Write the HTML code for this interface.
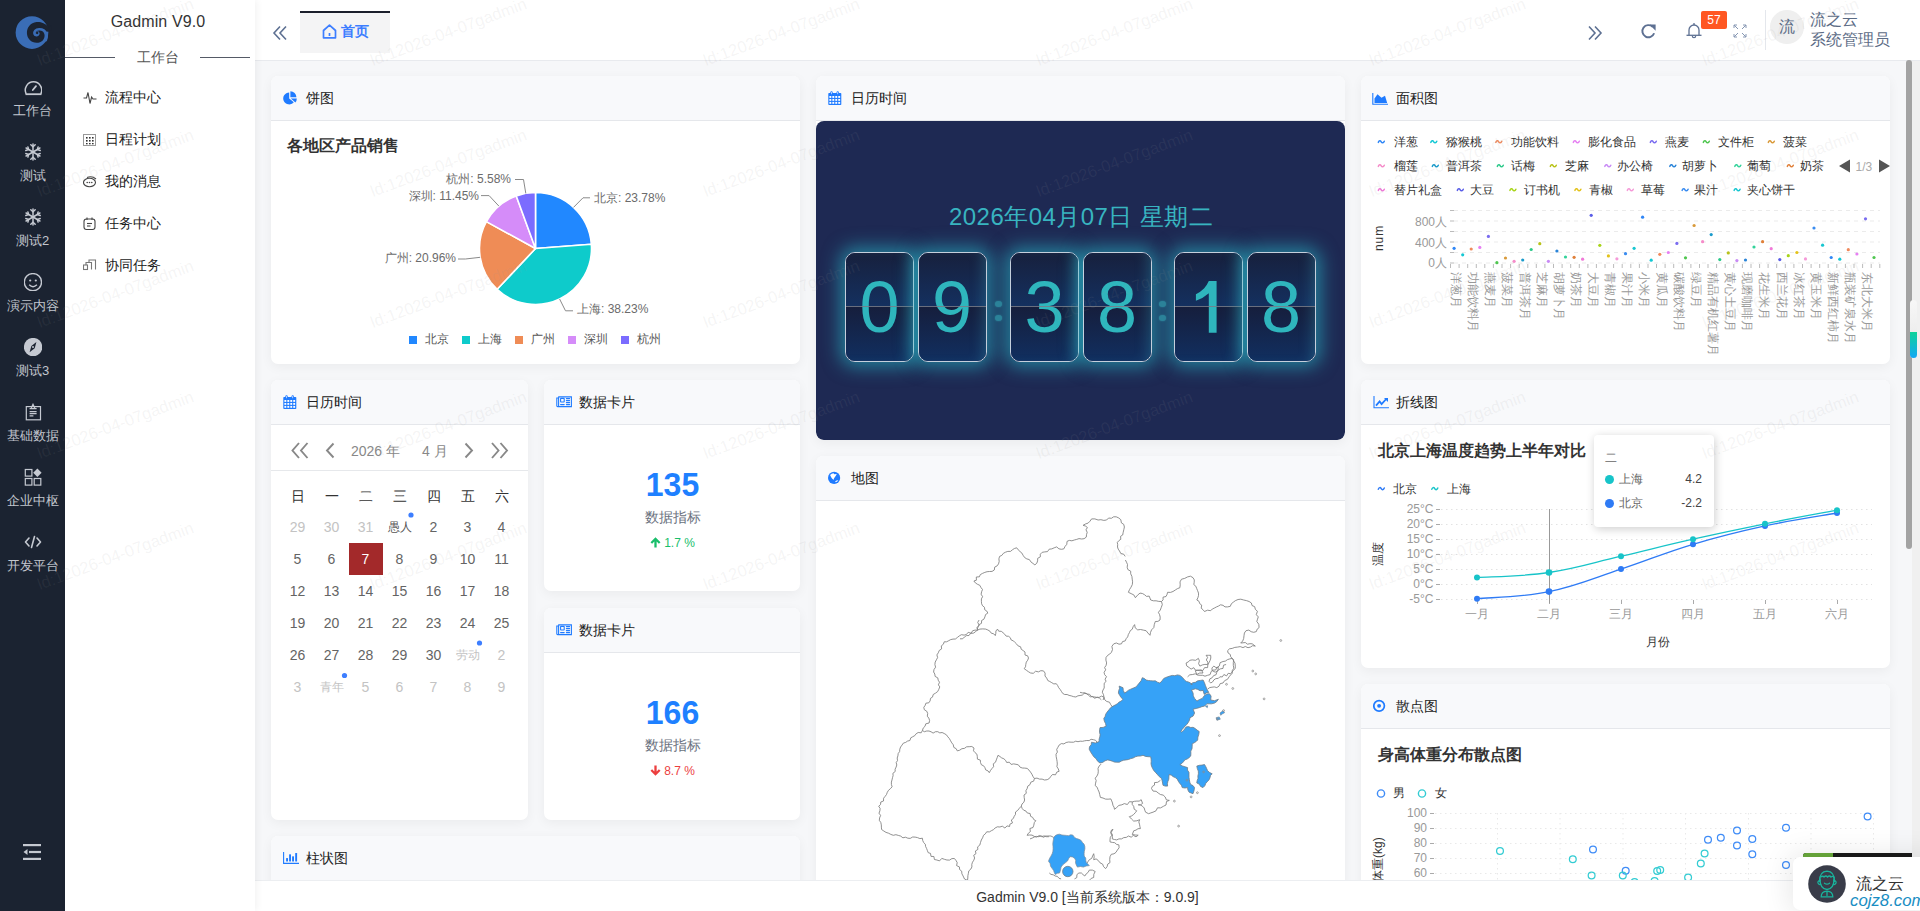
<!DOCTYPE html>
<html><head><meta charset="utf-8"><title>Gadmin</title><style>
*{box-sizing:border-box;margin:0;padding:0}
html,body{width:1920px;height:911px;overflow:hidden;background:#f6f7f9;font-family:"Liberation Sans",sans-serif;color:#333}
.abs{position:absolute}
#sb1{position:absolute;left:0;top:0;width:65px;height:911px;background:#1b2331}
#sb2{position:absolute;left:65px;top:0;width:190px;height:911px;background:#fff;z-index:5;box-shadow:2px 0 7px rgba(0,0,0,0.05)}
#hdr{position:absolute;left:255px;top:0;width:1665px;height:61px;background:#fff;border-bottom:1px solid #e8eaee}
#main{position:absolute;left:255px;top:61px;width:1665px;height:819px;background:#f6f7f9;overflow:hidden}
#ftr{position:absolute;left:255px;top:880px;width:1665px;height:31px;background:#fff;border-top:1px solid #eceef1}
.card{position:absolute;background:#fff;border-radius:7px;box-shadow:0 3px 12px rgba(0,0,0,0.05);overflow:hidden}
.ch{position:absolute;left:0;top:0;right:0;height:45px;background:#f8f9fb;border-bottom:1px solid #e5e7eb}
.ct{position:absolute;top:0;height:44px;line-height:44px;font-size:14px;color:#222}
.t{position:absolute;white-space:nowrap;line-height:1}

</style></head><body>
<div id="sb1">
<svg class="abs" style="left:12px;top:12px" width="40" height="40" viewBox="0 0 911 911">
<circle cx="455" cy="468" r="372" fill="#3a6db6"/>
<path d="M832 348 C760 250 650 222 560 230 C420 242 338 360 340 480 C342 610 440 702 560 702 C680 702 742 620 742 540 C742 500 730 470 715 450 L800 450 L900 420 L900 300 Z" fill="#1b2331"/>
<path d="M770 640 C800 560 790 470 720 420 C660 380 570 385 530 430 C495 470 510 520 555 525 C595 528 610 490 590 470" fill="none" stroke="#3a6db6" stroke-width="62" stroke-linecap="round"/>
<circle cx="575" cy="478" r="26" fill="#1b2331"/>
</svg>
<svg class="abs" style="left:23.5px;top:78px" width="18" height="18" viewBox="0 0 18 18"><path d="M2.2 15.8 A8.2 8.2 0 1 1 16.8 15.8" fill="none" stroke="#c5c9d1" stroke-width="1.5"/><line x1="1.5" y1="16.2" x2="17.5" y2="16.2" stroke="#c5c9d1" stroke-width="1.8"/><line x1="8.8" y1="12" x2="12" y2="8.2" stroke="#c5c9d1" stroke-width="1.8" stroke-linecap="round"/></svg>
<div class="t" style="left:0;width:65px;text-align:center;top:104px;font-size:13px;color:#c2c6ce">工作台</div>
<svg class="abs" style="left:23.5px;top:143px" width="18" height="18" viewBox="0 0 18 18"><g stroke="#c5c9d1" stroke-width="1.5" stroke-linecap="round" fill="none"><line x1="9" y1="1" x2="9" y2="17"/><line x1="2.1" y1="5" x2="15.9" y2="13"/><line x1="2.1" y1="13" x2="15.9" y2="5"/><path d="M6.8 1.8 L9 3.8 L11.2 1.8 M6.8 16.2 L9 14.2 L11.2 16.2 M1.8 7.5 L4.6 6.6 L3.9 3.9 M16.2 10.5 L13.4 11.4 L14.1 14.1 M1.8 10.5 L4.6 11.4 L3.9 14.1 M16.2 7.5 L13.4 6.6 L14.1 3.9"/></g></svg>
<div class="t" style="left:0;width:65px;text-align:center;top:169px;font-size:13px;color:#c2c6ce">测试</div>
<svg class="abs" style="left:23.5px;top:208px" width="18" height="18" viewBox="0 0 18 18"><g stroke="#c5c9d1" stroke-width="1.5" stroke-linecap="round" fill="none"><line x1="9" y1="1" x2="9" y2="17"/><line x1="2.1" y1="5" x2="15.9" y2="13"/><line x1="2.1" y1="13" x2="15.9" y2="5"/><path d="M6.8 1.8 L9 3.8 L11.2 1.8 M6.8 16.2 L9 14.2 L11.2 16.2 M1.8 7.5 L4.6 6.6 L3.9 3.9 M16.2 10.5 L13.4 11.4 L14.1 14.1 M1.8 10.5 L4.6 11.4 L3.9 14.1 M16.2 7.5 L13.4 6.6 L14.1 3.9"/></g></svg>
<div class="t" style="left:0;width:65px;text-align:center;top:234px;font-size:13px;color:#c2c6ce">测试2</div>
<svg class="abs" style="left:23.5px;top:273px" width="18" height="18" viewBox="0 0 18 18"><circle cx="8.9" cy="9.2" r="8.6" fill="none" stroke="#c5c9d1" stroke-width="1.4"/><circle cx="6.2" cy="7.5" r="1.1" fill="#c5c9d1"/><circle cx="11.8" cy="7.5" r="1.1" fill="#c5c9d1"/><path d="M5.2 11.8 Q9 15.6 12.9 11.8" fill="none" stroke="#c5c9d1" stroke-width="1.4"/></svg>
<div class="t" style="left:0;width:65px;text-align:center;top:299px;font-size:13px;color:#c2c6ce">演示内容</div>
<svg class="abs" style="left:23.5px;top:338px" width="18" height="18" viewBox="0 0 18 18"><circle cx="9.1" cy="9.1" r="9.2" fill="#c5c9d1"/><path d="M12.4 4 L10.7 10.2 L5.6 14.2 L7.4 8 Z" fill="#1b2331"/><circle cx="9" cy="9.1" r="1" fill="#c5c9d1"/></svg>
<div class="t" style="left:0;width:65px;text-align:center;top:364px;font-size:13px;color:#c2c6ce">测试3</div>
<svg class="abs" style="left:23.5px;top:403px" width="18" height="18" viewBox="0 0 18 18"><g fill="none" stroke="#c5c9d1" stroke-width="1.2"><rect x="2.3" y="3.6" width="14.2" height="13.2"/><path d="M6.9 5.8 L9 1.3 L11.1 5.8"/><path d="M5.6 5.7 H12.6 M5.6 8.6 H12.6 M5.6 10.7 H12.6 M5.6 12.8 H9.4"/></g></svg>
<div class="t" style="left:0;width:65px;text-align:center;top:429px;font-size:13px;color:#c2c6ce">基础数据</div>
<svg class="abs" style="left:23.5px;top:468px" width="18" height="18" viewBox="0 0 18 18"><g fill="none" stroke="#c5c9d1" stroke-width="1.2"><rect x="1.3" y="1.5" width="6.6" height="6.6"/><rect x="1.3" y="10.5" width="6.6" height="6.6"/><rect x="10.2" y="10.5" width="6.6" height="6.6"/></g><path d="M13.4 0.6 L17.6 4.8 L13.4 9 L9.2 4.8 Z" fill="#c5c9d1"/></svg>
<div class="t" style="left:0;width:65px;text-align:center;top:494px;font-size:13px;color:#c2c6ce">企业中枢</div>
<svg class="abs" style="left:23.5px;top:533px" width="18" height="18" viewBox="0 0 18 18"><g fill="none" stroke="#c5c9d1" stroke-width="1.6" stroke-linecap="round" stroke-linejoin="round"><path d="M5 5 L1.5 9 L5 13"/><path d="M13 5 L16.5 9 L13 13"/><line x1="10.5" y1="3.5" x2="7.5" y2="14.5"/></g></svg>
<div class="t" style="left:0;width:65px;text-align:center;top:559px;font-size:13px;color:#c2c6ce">开发平台</div>
<svg class="abs" style="left:23px;top:843px" width="18" height="18" viewBox="0 0 18 18"><g fill="#c5c9d1"><rect x="0" y="1" width="18" height="2.2"/><rect x="6" y="7.9" width="12" height="2.2"/><rect x="0" y="14.8" width="18" height="2.2"/><path d="M0.5 9 L4.5 6 L4.5 12 Z"/></g></svg>
</div>
<div id="sb2">
<div class="t" style="left:-2px;width:190px;text-align:center;top:14px;font-size:16px;color:#333;letter-spacing:0.1px">Gadmin V9.0</div>
<div class="abs" style="left:0;top:57px;width:50px;height:1px;background:#555a66"></div>
<div class="abs" style="left:135px;top:57px;width:50px;height:1px;background:#555a66"></div>
<div class="t" style="left:0;width:186px;text-align:center;top:50px;font-size:14px;color:#555">工作台</div>
<svg class="abs" style="left:18px;top:91px" width="14" height="14" viewBox="0 0 14 14"><path d="M0.5 7 H3.5 L5 1.5 L7 12.5 L8.6 6 L10 8 H13.5" fill="none" stroke="#444" stroke-width="1.1"/></svg>
<div class="t" style="left:40px;top:90px;font-size:14px;color:#222">流程中心</div>
<svg class="abs" style="left:18px;top:133px" width="14" height="14" viewBox="0 0 14 14"><g fill="none" stroke="#999" stroke-width="1"><rect x="0.5" y="1.5" width="12" height="11"/></g><g fill="#333"><rect x="3" y="4" width="1.6" height="1.6"/><rect x="6" y="4" width="1.6" height="1.6"/><rect x="9" y="4" width="1.6" height="1.6"/><rect x="3" y="7" width="1.6" height="1.6"/><rect x="6" y="7" width="1.6" height="1.6"/><rect x="9" y="7" width="1.6" height="1.6"/><rect x="3" y="10" width="1.6" height="1.3"/><rect x="6" y="10" width="1.6" height="1.3"/><rect x="9" y="10" width="1.6" height="1.3"/></g></svg>
<div class="t" style="left:40px;top:132px;font-size:14px;color:#222">日程计划</div>
<svg class="abs" style="left:18px;top:175px" width="14" height="14" viewBox="0 0 14 14"><g fill="none" stroke="#444" stroke-width="1.1"><ellipse cx="6.5" cy="7.5" rx="6" ry="4.2"/><path d="M4 2.5 Q9 0.5 13 4"/></g><g fill="#444"><circle cx="4.2" cy="7.5" r="0.8"/><circle cx="6.5" cy="7.5" r="0.8"/><circle cx="8.8" cy="7.5" r="0.8"/></g></svg>
<div class="t" style="left:40px;top:174px;font-size:14px;color:#222">我的消息</div>
<svg class="abs" style="left:18px;top:217px" width="14" height="14" viewBox="0 0 14 14"><g fill="none" stroke="#444" stroke-width="1.1"><rect x="1" y="2" width="11" height="10.5" rx="2.5"/><line x1="4" y1="0.5" x2="4" y2="3"/><line x1="9" y1="0.5" x2="9" y2="3"/><line x1="4" y1="6.5" x2="9" y2="6.5"/><line x1="4" y1="9" x2="7.5" y2="9"/></g></svg>
<div class="t" style="left:40px;top:216px;font-size:14px;color:#222">任务中心</div>
<svg class="abs" style="left:18px;top:259px" width="14" height="14" viewBox="0 0 14 14"><g fill="none" stroke="#777" stroke-width="1.1"><rect x="0.5" y="6" width="4" height="4.5"/><path d="M3 6 V3.5 H8.5 V10.5"/><path d="M6 3.5 V1 H12.5 V10.5"/></g></svg>
<div class="t" style="left:40px;top:258px;font-size:14px;color:#222">协同任务</div>
</div>
<div id="hdr">
<svg class="abs" style="left:17px;top:25px" width="16" height="16" viewBox="0 0 16 16"><g fill="none" stroke="#5d7092" stroke-width="1.6"><path d="M8 1.5 L2 8 L8 14.5"/><path d="M14 1.5 L8 8 L14 14.5"/></g></svg>
<div class="abs" style="left:45px;top:11px;width:90px;height:42px;background:#f4f4f5;border-top:2px solid #1b1f2c"></div>
<svg class="abs" style="left:67px;top:24px" width="15" height="15" viewBox="0 0 15 15"><path d="M1.5 6.5 L7.5 1.2 L13.5 6.5 V13.8 H1.5 Z" fill="none" stroke="#3d7eff" stroke-width="1.7" stroke-linejoin="round"/><line x1="7.5" y1="9" x2="7.5" y2="12" stroke="#3d7eff" stroke-width="1.7"/></svg>
<div class="t" style="left:86px;top:24px;font-size:14px;color:#3d7eff;font-weight:bold">首页</div>
<svg class="abs" style="left:1332px;top:25px" width="16" height="16" viewBox="0 0 16 16"><g fill="none" stroke="#5d7092" stroke-width="1.6"><path d="M2 1.5 L8 8 L2 14.5"/><path d="M8 1.5 L14 8 L8 14.5"/></g></svg>
<svg class="abs" style="left:1384.5px;top:22.5px" width="17" height="17" viewBox="0 0 16 16"><path d="M13.3 9.6 A5.7 5.7 0 1 1 11.9 3.6" fill="none" stroke="#5d7092" stroke-width="1.8"/><path d="M8.8 1.3 H14.7 V7.2 Z" fill="#5d7092"/></svg>
<svg class="abs" style="left:1431px;top:22px" width="16" height="18" viewBox="0 0 16 18"><path d="M3 13 V8 A5 5 0 0 1 13 8 V13" fill="none" stroke="#5d7092" stroke-width="1.3"/><line x1="0.5" y1="13.3" x2="15.5" y2="13.3" stroke="#5d7092" stroke-width="1.3"/><path d="M6.3 14 A1.7 1.7 0 0 0 9.7 14" fill="none" stroke="#5d7092" stroke-width="1.2"/><line x1="8" y1="1" x2="8" y2="3" stroke="#5d7092" stroke-width="1.3"/></svg>
<div class="abs" style="left:1446px;top:11px;width:26px;height:18px;background:#ff5722;border-radius:2px;color:#fff;font-size:12px;line-height:18px;text-align:center">57</div>
<svg class="abs" style="left:1478px;top:24px" width="14" height="14" viewBox="0 0 14 14"><g fill="none" stroke="#8596b2" stroke-width="1"><path d="M1 4 V1 H4 M1 1 L5 5"/><path d="M10 1 H13 V4 M13 1 L9 5"/><path d="M1 10 V13 H4 M1 13 L5 9"/><path d="M13 10 V13 H10 M13 13 L9 9"/></g></svg>
<div class="abs" style="left:1510px;top:10px;width:1px;height:40px;background:#e4e7ec"></div>
<div class="abs" style="left:1515px;top:10px;width:34px;height:34px;border-radius:50%;background:#efefef;color:#5b6b85;font-size:16px;line-height:34px;text-align:center">流</div>
<div class="t" style="left:1555px;top:12px;font-size:16px;color:#5b6b85">流之云</div>
<div class="t" style="left:1555px;top:32px;font-size:16px;color:#5b6b85">系统管理员</div>
</div>
<div id="main"></div>
<div class="card" id="c_pie" style="left:271px;top:76px;width:529px;height:288px">
<div class="ch"><div class="abs" style="left:12px;top:15px;line-height:0"><svg width="14" height="14" viewBox="0 0 14 14"><path d="M6.2 7.4 L6.2 1.4 A6 6 0 1 0 10.8 11.26 Z" fill="#1f7bff"/><path d="M7.4 6.2 L7.4 0.2 A6 6 0 0 1 13.4 6.2 Z" fill="#1f7bff"/><path d="M7.8 7.6 L13.8 7.6 A6 6 0 0 1 12.4 11.46 Z" fill="#1f7bff"/></svg></div><div class="t" style="left:34.5px;top:15px;font-size:14px;color:#222">饼图</div></div>
<svg class="abs" style="left:0;top:0" width="529" height="288" viewBox="271 76 529 288"><path d="M535.5 248.5 L535.50 192.50 A56 56 0 0 1 591.34 244.21 Z" fill="#2188ff" stroke="#fff" stroke-width="1.6" stroke-linejoin="round"/><path d="M535.5 248.5 L591.34 244.21 A56 56 0 0 1 497.14 289.30 Z" fill="#0ecbcb" stroke="#fff" stroke-width="1.6" stroke-linejoin="round"/><path d="M535.5 248.5 L497.14 289.30 A56 56 0 0 1 486.38 221.61 Z" fill="#ef8c56" stroke="#fff" stroke-width="1.6" stroke-linejoin="round"/><path d="M535.5 248.5 L486.38 221.61 A56 56 0 0 1 516.27 195.91 Z" fill="#d58cf9" stroke="#fff" stroke-width="1.6" stroke-linejoin="round"/><path d="M535.5 248.5 L516.27 195.91 A56 56 0 0 1 535.50 192.50 Z" fill="#7b6cff" stroke="#fff" stroke-width="1.6" stroke-linejoin="round"/><polyline points="573.5,207.4 583,197.8 590,197.8" fill="none" stroke="#8a8a8a" stroke-width="1"/><polyline points="559.6,299 565.5,310.8 573,310.8" fill="none" stroke="#8a8a8a" stroke-width="1"/><polyline points="480.2,257.3 465.4,259 458,259" fill="none" stroke="#8a8a8a" stroke-width="1"/><polyline points="498.9,206.1 489.1,195.6 481,195.6" fill="none" stroke="#8a8a8a" stroke-width="1"/><polyline points="525.8,193.4 523.5,179.5 515,179.5" fill="none" stroke="#8a8a8a" stroke-width="1"/><rect x="409" y="336" width="8" height="8" fill="#2188ff"/><rect x="462" y="336" width="8" height="8" fill="#0ecbcb"/><rect x="515" y="336" width="8" height="8" fill="#ef8c56"/><rect x="568" y="336" width="8" height="8" fill="#d58cf9"/><rect x="621" y="336" width="8" height="8" fill="#7b6cff"/></svg><div class="abs" style="left:-271px;top:-76px;width:0;height:0"><div class="t" style="left:287px;top:138px;font-size:16px;color:#333;font-weight:bold;">各地区产品销售</div><div class="t" style="left:594px;top:191.5px;font-size:12px;color:#6b6b6b;font-weight:normal;">北京: 23.78%</div><div class="t" style="left:577px;top:303px;font-size:12px;color:#6b6b6b;font-weight:normal;">上海: 38.23%</div><div class="t" style="left:56px;width:400px;text-align:right;top:252px;font-size:12px;color:#6b6b6b;font-weight:normal;">广州: 20.96%</div><div class="t" style="left:79px;width:400px;text-align:right;top:189.5px;font-size:12px;color:#6b6b6b;font-weight:normal;">深圳: 11.45%</div><div class="t" style="left:111px;width:400px;text-align:right;top:173px;font-size:12px;color:#6b6b6b;font-weight:normal;">杭州: 5.58%</div><div class="t" style="left:425px;top:333px;font-size:12px;color:#555;font-weight:normal;">北京</div><div class="t" style="left:478px;top:333px;font-size:12px;color:#555;font-weight:normal;">上海</div><div class="t" style="left:531px;top:333px;font-size:12px;color:#555;font-weight:normal;">广州</div><div class="t" style="left:584px;top:333px;font-size:12px;color:#555;font-weight:normal;">深圳</div><div class="t" style="left:637px;top:333px;font-size:12px;color:#555;font-weight:normal;">杭州</div></div>
</div>
<div class="card" id="c_clock" style="left:816px;top:76px;width:529px;height:364px">
<div class="ch"><div class="abs" style="left:12px;top:15px;line-height:0"><svg width="14" height="14" viewBox="0 0 14 14"><rect x="0.3" y="2" width="13" height="12" rx="0.8" fill="#1f7bff"/><g fill="#fff"><rect x="1.40" y="5.00" width="1.9" height="1.9"/><rect x="4.35" y="5.00" width="1.9" height="1.9"/><rect x="7.30" y="5.00" width="1.9" height="1.9"/><rect x="10.25" y="5.00" width="1.9" height="1.9"/><rect x="1.40" y="7.95" width="1.9" height="1.9"/><rect x="4.35" y="7.95" width="1.9" height="1.9"/><rect x="7.30" y="7.95" width="1.9" height="1.9"/><rect x="10.25" y="7.95" width="1.9" height="1.9"/><rect x="1.40" y="10.90" width="1.9" height="1.9"/><rect x="4.35" y="10.90" width="1.9" height="1.9"/><rect x="7.30" y="10.90" width="1.9" height="1.9"/><rect x="10.25" y="10.90" width="1.9" height="1.9"/></g><g fill="#1f7bff"><rect x="2.4" y="0.2" width="2.2" height="3.5" rx="1"/><rect x="8.6" y="0.2" width="2.2" height="3.5" rx="1"/></g><g fill="#cfe0ff"><rect x="3.1" y="1" width="0.8" height="2.2"/><rect x="9.3" y="1" width="0.8" height="2.2"/></g></svg></div><div class="t" style="left:34.5px;top:15px;font-size:14px;color:#222">日历时间</div></div>
<div class="abs" style="left:0;top:45px;width:529px;height:319px;background:#1e2953;border-radius:8px"></div><div class="abs" style="left:-816px;top:-76px;width:0;height:0"><div class="t" style="left:949px;top:205px;font-size:24px;color:#38b4c0;font-weight:normal;letter-spacing:0.45px">2026年04月07日 星期二</div><div class="abs" style="left:845px;top:252px;width:69px;height:110px;border-radius:10px;box-shadow:0 0 18px 5px rgba(42,190,205,0.58)"></div><div class="abs" style="left:845px;top:252px;width:69px;height:110px;border:1px solid rgba(215,225,235,0.9);border-radius:10px;overflow:hidden"><div class="abs" style="left:0;top:0;width:67px;height:53px;background:linear-gradient(#17203d,#14305f)"></div><div class="abs" style="left:0;top:53px;width:67px;height:55px;background:linear-gradient(#161e3c,#112f60)"></div><div class="abs" style="left:0;top:0;width:67px;height:108px;box-shadow:inset -10px 0 14px -8px rgba(60,175,195,0.35)"></div><div class="t" style="left:0;width:67px;text-align:center;top:17.5px;font-size:72px;color:#2fb6bd">0</div><div class="abs" style="left:0;top:53px;width:67px;height:1px;background:rgba(120,124,138,0.85)"></div></div><div class="abs" style="left:917.5px;top:252px;width:69px;height:110px;border-radius:10px;box-shadow:0 0 18px 5px rgba(42,190,205,0.58)"></div><div class="abs" style="left:917.5px;top:252px;width:69px;height:110px;border:1px solid rgba(215,225,235,0.9);border-radius:10px;overflow:hidden"><div class="abs" style="left:0;top:0;width:67px;height:53px;background:linear-gradient(#17203d,#14305f)"></div><div class="abs" style="left:0;top:53px;width:67px;height:55px;background:linear-gradient(#161e3c,#112f60)"></div><div class="abs" style="left:0;top:0;width:67px;height:108px;box-shadow:inset -10px 0 14px -8px rgba(60,175,195,0.35)"></div><div class="t" style="left:0;width:67px;text-align:center;top:17.5px;font-size:72px;color:#2fb6bd">9</div><div class="abs" style="left:0;top:53px;width:67px;height:1px;background:rgba(120,124,138,0.85)"></div></div><div class="abs" style="left:1010px;top:252px;width:69px;height:110px;border-radius:10px;box-shadow:0 0 18px 5px rgba(42,190,205,0.58)"></div><div class="abs" style="left:1010px;top:252px;width:69px;height:110px;border:1px solid rgba(215,225,235,0.9);border-radius:10px;overflow:hidden"><div class="abs" style="left:0;top:0;width:67px;height:53px;background:linear-gradient(#17203d,#14305f)"></div><div class="abs" style="left:0;top:53px;width:67px;height:55px;background:linear-gradient(#161e3c,#112f60)"></div><div class="abs" style="left:0;top:0;width:67px;height:108px;box-shadow:inset -10px 0 14px -8px rgba(60,175,195,0.35)"></div><div class="t" style="left:0;width:67px;text-align:center;top:17.5px;font-size:72px;color:#2fb6bd">3</div><div class="abs" style="left:0;top:53px;width:67px;height:1px;background:rgba(120,124,138,0.85)"></div></div><div class="abs" style="left:1082.5px;top:252px;width:69px;height:110px;border-radius:10px;box-shadow:0 0 18px 5px rgba(42,190,205,0.58)"></div><div class="abs" style="left:1082.5px;top:252px;width:69px;height:110px;border:1px solid rgba(215,225,235,0.9);border-radius:10px;overflow:hidden"><div class="abs" style="left:0;top:0;width:67px;height:53px;background:linear-gradient(#17203d,#14305f)"></div><div class="abs" style="left:0;top:53px;width:67px;height:55px;background:linear-gradient(#161e3c,#112f60)"></div><div class="abs" style="left:0;top:0;width:67px;height:108px;box-shadow:inset -10px 0 14px -8px rgba(60,175,195,0.35)"></div><div class="t" style="left:0;width:67px;text-align:center;top:17.5px;font-size:72px;color:#2fb6bd">8</div><div class="abs" style="left:0;top:53px;width:67px;height:1px;background:rgba(120,124,138,0.85)"></div></div><div class="abs" style="left:1174px;top:252px;width:69px;height:110px;border-radius:10px;box-shadow:0 0 18px 5px rgba(42,190,205,0.58)"></div><div class="abs" style="left:1174px;top:252px;width:69px;height:110px;border:1px solid rgba(215,225,235,0.9);border-radius:10px;overflow:hidden"><div class="abs" style="left:0;top:0;width:67px;height:53px;background:linear-gradient(#17203d,#14305f)"></div><div class="abs" style="left:0;top:53px;width:67px;height:55px;background:linear-gradient(#161e3c,#112f60)"></div><div class="abs" style="left:0;top:0;width:67px;height:108px;box-shadow:inset -10px 0 14px -8px rgba(60,175,195,0.35)"></div><svg class="abs" style="left:0;top:0" width="69" height="110" viewBox="1175 253 69 110"><path d="M1208.8 281 L1216.6 281 L1216.6 332.8 L1208.8 332.8 L1208.8 293.2 Q1203.5 298 1195.9 300.8 L1195.9 294.2 Q1200.5 292 1204 288.5 Q1207 285.2 1208.8 281 Z" fill="#2fb6bd"/></svg><div class="abs" style="left:0;top:53px;width:67px;height:1px;background:rgba(120,124,138,0.85)"></div></div><div class="abs" style="left:1246.5px;top:252px;width:69px;height:110px;border-radius:10px;box-shadow:0 0 18px 5px rgba(42,190,205,0.58)"></div><div class="abs" style="left:1246.5px;top:252px;width:69px;height:110px;border:1px solid rgba(215,225,235,0.9);border-radius:10px;overflow:hidden"><div class="abs" style="left:0;top:0;width:67px;height:53px;background:linear-gradient(#17203d,#14305f)"></div><div class="abs" style="left:0;top:53px;width:67px;height:55px;background:linear-gradient(#161e3c,#112f60)"></div><div class="abs" style="left:0;top:0;width:67px;height:108px;box-shadow:inset -10px 0 14px -8px rgba(60,175,195,0.35)"></div><div class="t" style="left:0;width:67px;text-align:center;top:17.5px;font-size:72px;color:#2fb6bd">8</div><div class="abs" style="left:0;top:53px;width:67px;height:1px;background:rgba(120,124,138,0.85)"></div></div><div class="abs" style="left:994.5px;top:301.3px;width:7px;height:6px;border-radius:50%;background:#2b8299;box-shadow:0 0 2px #2b8299"></div><div class="abs" style="left:994.5px;top:315.2px;width:7px;height:6px;border-radius:50%;background:#2b8299;box-shadow:0 0 2px #2b8299"></div><div class="abs" style="left:1159.0px;top:301.3px;width:7px;height:6px;border-radius:50%;background:#2b8299;box-shadow:0 0 2px #2b8299"></div><div class="abs" style="left:1159.0px;top:315.2px;width:7px;height:6px;border-radius:50%;background:#2b8299;box-shadow:0 0 2px #2b8299"></div></div>
</div>
<div class="card" id="c_area" style="left:1361px;top:76px;width:529px;height:288px">
<div class="ch"><div class="abs" style="left:11px;top:17px;line-height:0"><svg width="16" height="12" viewBox="0 0 16 12"><path d="M0.8 0 V11.2 H16" fill="none" stroke="#1f7bff" stroke-width="1.1"/><path d="M2.5 10 L2.5 5.5 L5.5 1.2 L9.5 4.8 L13 2.8 L15.2 10 Z" fill="#1f7bff"/></svg></div><div class="t" style="left:34.5px;top:15px;font-size:14px;color:#222">面积图</div></div>
<svg class="abs" style="left:0;top:0" width="529" height="288" viewBox="1361 76 529 288"><path d="M1378.3 142.4 C1379.2 140.4 1380.4 140.4 1381.2 141.8 S1383.4 143.4 1384.3 141.20000000000002" fill="none" stroke="#2f86f6" stroke-width="1.5" stroke-linecap="round"/><path d="M1430.8 142.4 C1431.7 140.4 1432.9 140.4 1433.7 141.8 S1435.9 143.4 1436.8 141.20000000000002" fill="none" stroke="#14c8d4" stroke-width="1.5" stroke-linecap="round"/><path d="M1495.8 142.4 C1496.7 140.4 1497.9 140.4 1498.7 141.8 S1500.9 143.4 1501.8 141.20000000000002" fill="none" stroke="#f08a5d" stroke-width="1.5" stroke-linecap="round"/><path d="M1573.3 142.4 C1574.2 140.4 1575.4 140.4 1576.2 141.8 S1578.4 143.4 1579.3 141.20000000000002" fill="none" stroke="#e680f2" stroke-width="1.5" stroke-linecap="round"/><path d="M1650.3 142.4 C1651.2 140.4 1652.4 140.4 1653.2 141.8 S1655.4 143.4 1656.3 141.20000000000002" fill="none" stroke="#7a6cf0" stroke-width="1.5" stroke-linecap="round"/><path d="M1703.3 142.4 C1704.2 140.4 1705.4 140.4 1706.2 141.8 S1708.4 143.4 1709.3 141.20000000000002" fill="none" stroke="#4fc64f" stroke-width="1.5" stroke-linecap="round"/><path d="M1768.3 142.4 C1769.2 140.4 1770.4 140.4 1771.2 141.8 S1773.4 143.4 1774.3 141.20000000000002" fill="none" stroke="#d99a3a" stroke-width="1.5" stroke-linecap="round"/><path d="M1378.3 166.4 C1379.2 164.4 1380.4 164.4 1381.2 165.8 S1383.4 167.4 1384.3 165.20000000000002" fill="none" stroke="#f58cc9" stroke-width="1.5" stroke-linecap="round"/><path d="M1432.3 166.4 C1433.2 164.4 1434.4 164.4 1435.2 165.8 S1437.4 167.4 1438.3 165.20000000000002" fill="none" stroke="#1a9bcc" stroke-width="1.5" stroke-linecap="round"/><path d="M1497.3 166.4 C1498.2 164.4 1499.4 164.4 1500.2 165.8 S1502.4 167.4 1503.3 165.20000000000002" fill="none" stroke="#2cc98a" stroke-width="1.5" stroke-linecap="round"/><path d="M1550.3 166.4 C1551.2 164.4 1552.4 164.4 1553.2 165.8 S1555.4 167.4 1556.3 165.20000000000002" fill="none" stroke="#b8c21a" stroke-width="1.5" stroke-linecap="round"/><path d="M1604.8 166.4 C1605.7 164.4 1606.9 164.4 1607.7 165.8 S1609.9 167.4 1610.8 165.20000000000002" fill="none" stroke="#c88af5" stroke-width="1.5" stroke-linecap="round"/><path d="M1669.8 166.4 C1670.7 164.4 1671.9 164.4 1672.7 165.8 S1674.9 167.4 1675.8 165.20000000000002" fill="none" stroke="#2a84d8" stroke-width="1.5" stroke-linecap="round"/><path d="M1734.8 166.4 C1735.7 164.4 1736.9 164.4 1737.7 165.8 S1739.9 167.4 1740.8 165.20000000000002" fill="none" stroke="#33d39a" stroke-width="1.5" stroke-linecap="round"/><path d="M1787.3 166.4 C1788.2 164.4 1789.4 164.4 1790.2 165.8 S1792.4 167.4 1793.3 165.20000000000002" fill="none" stroke="#e0803a" stroke-width="1.5" stroke-linecap="round"/><path d="M1378.3 190.4 C1379.2 188.4 1380.4 188.4 1381.2 189.8 S1383.4 191.4 1384.3 189.20000000000002" fill="none" stroke="#f07ad8" stroke-width="1.5" stroke-linecap="round"/><path d="M1457.3 190.4 C1458.2 188.4 1459.4 188.4 1460.2 189.8 S1462.4 191.4 1463.3 189.20000000000002" fill="none" stroke="#5a5ee8" stroke-width="1.5" stroke-linecap="round"/><path d="M1509.8999999999999 190.4 C1510.8 188.4 1512.0 188.4 1512.8 189.8 S1515.0 191.4 1515.8999999999999 189.20000000000002" fill="none" stroke="#a8d41a" stroke-width="1.5" stroke-linecap="round"/><path d="M1574.8999999999999 190.4 C1575.8 188.4 1577.0 188.4 1577.8 189.8 S1580.0 191.4 1580.8999999999999 189.20000000000002" fill="none" stroke="#e3c21a" stroke-width="1.5" stroke-linecap="round"/><path d="M1627.3 190.4 C1628.2 188.4 1629.4 188.4 1630.2 189.8 S1632.4 191.4 1633.3 189.20000000000002" fill="none" stroke="#f59ad8" stroke-width="1.5" stroke-linecap="round"/><path d="M1682.1 190.4 C1683.0 188.4 1684.2 188.4 1685.0 189.8 S1687.2 191.4 1688.1 189.20000000000002" fill="none" stroke="#3a8cf0" stroke-width="1.5" stroke-linecap="round"/><path d="M1734.1 190.4 C1735.0 188.4 1736.2 188.4 1737.0 189.8 S1739.2 191.4 1740.1 189.20000000000002" fill="none" stroke="#18c6d0" stroke-width="1.5" stroke-linecap="round"/><path d="M1850 159.5 L1839 166 L1850 172.5 Z" fill="#555"/><path d="M1879 159.5 L1890 166 L1879 172.5 Z" fill="#555"/><line x1="1454" y1="210.5" x2="1880" y2="210.5" stroke="#ebebeb" stroke-width="1" stroke-dasharray="4 4"/><line x1="1450" y1="210.5" x2="1454" y2="210.5" stroke="#bbb" stroke-width="1"/><line x1="1454" y1="221.0" x2="1880" y2="221.0" stroke="#ebebeb" stroke-width="1" stroke-dasharray="4 4"/><line x1="1450" y1="221.0" x2="1454" y2="221.0" stroke="#bbb" stroke-width="1"/><line x1="1454" y1="231.5" x2="1880" y2="231.5" stroke="#ebebeb" stroke-width="1" stroke-dasharray="4 4"/><line x1="1450" y1="231.5" x2="1454" y2="231.5" stroke="#bbb" stroke-width="1"/><line x1="1454" y1="242.0" x2="1880" y2="242.0" stroke="#ebebeb" stroke-width="1" stroke-dasharray="4 4"/><line x1="1450" y1="242.0" x2="1454" y2="242.0" stroke="#bbb" stroke-width="1"/><line x1="1454" y1="252.5" x2="1880" y2="252.5" stroke="#ebebeb" stroke-width="1" stroke-dasharray="4 4"/><line x1="1450" y1="252.5" x2="1454" y2="252.5" stroke="#bbb" stroke-width="1"/><line x1="1454" y1="263.0" x2="1880" y2="263.0" stroke="#ebebeb" stroke-width="1" stroke-dasharray="4 4"/><line x1="1450" y1="263.0" x2="1454" y2="263.0" stroke="#bbb" stroke-width="1"/><line x1="1450.5" y1="264" x2="1450.5" y2="268" stroke="#bbb" stroke-width="1"/><line x1="1459.1" y1="264" x2="1459.1" y2="268" stroke="#bbb" stroke-width="1"/><line x1="1467.7" y1="264" x2="1467.7" y2="268" stroke="#bbb" stroke-width="1"/><line x1="1476.3" y1="264" x2="1476.3" y2="268" stroke="#bbb" stroke-width="1"/><line x1="1484.8" y1="264" x2="1484.8" y2="268" stroke="#bbb" stroke-width="1"/><line x1="1493.4" y1="264" x2="1493.4" y2="268" stroke="#bbb" stroke-width="1"/><line x1="1502.0" y1="264" x2="1502.0" y2="268" stroke="#bbb" stroke-width="1"/><line x1="1510.6" y1="264" x2="1510.6" y2="268" stroke="#bbb" stroke-width="1"/><line x1="1519.2" y1="264" x2="1519.2" y2="268" stroke="#bbb" stroke-width="1"/><line x1="1527.8" y1="264" x2="1527.8" y2="268" stroke="#bbb" stroke-width="1"/><line x1="1536.3" y1="264" x2="1536.3" y2="268" stroke="#bbb" stroke-width="1"/><line x1="1544.9" y1="264" x2="1544.9" y2="268" stroke="#bbb" stroke-width="1"/><line x1="1553.5" y1="264" x2="1553.5" y2="268" stroke="#bbb" stroke-width="1"/><line x1="1562.1" y1="264" x2="1562.1" y2="268" stroke="#bbb" stroke-width="1"/><line x1="1570.7" y1="264" x2="1570.7" y2="268" stroke="#bbb" stroke-width="1"/><line x1="1579.3" y1="264" x2="1579.3" y2="268" stroke="#bbb" stroke-width="1"/><line x1="1587.9" y1="264" x2="1587.9" y2="268" stroke="#bbb" stroke-width="1"/><line x1="1596.4" y1="264" x2="1596.4" y2="268" stroke="#bbb" stroke-width="1"/><line x1="1605.0" y1="264" x2="1605.0" y2="268" stroke="#bbb" stroke-width="1"/><line x1="1613.6" y1="264" x2="1613.6" y2="268" stroke="#bbb" stroke-width="1"/><line x1="1622.2" y1="264" x2="1622.2" y2="268" stroke="#bbb" stroke-width="1"/><line x1="1630.8" y1="264" x2="1630.8" y2="268" stroke="#bbb" stroke-width="1"/><line x1="1639.4" y1="264" x2="1639.4" y2="268" stroke="#bbb" stroke-width="1"/><line x1="1648.0" y1="264" x2="1648.0" y2="268" stroke="#bbb" stroke-width="1"/><line x1="1656.5" y1="264" x2="1656.5" y2="268" stroke="#bbb" stroke-width="1"/><line x1="1665.1" y1="264" x2="1665.1" y2="268" stroke="#bbb" stroke-width="1"/><line x1="1673.7" y1="264" x2="1673.7" y2="268" stroke="#bbb" stroke-width="1"/><line x1="1682.3" y1="264" x2="1682.3" y2="268" stroke="#bbb" stroke-width="1"/><line x1="1690.9" y1="264" x2="1690.9" y2="268" stroke="#bbb" stroke-width="1"/><line x1="1699.5" y1="264" x2="1699.5" y2="268" stroke="#bbb" stroke-width="1"/><line x1="1708.0" y1="264" x2="1708.0" y2="268" stroke="#bbb" stroke-width="1"/><line x1="1716.6" y1="264" x2="1716.6" y2="268" stroke="#bbb" stroke-width="1"/><line x1="1725.2" y1="264" x2="1725.2" y2="268" stroke="#bbb" stroke-width="1"/><line x1="1733.8" y1="264" x2="1733.8" y2="268" stroke="#bbb" stroke-width="1"/><line x1="1742.4" y1="264" x2="1742.4" y2="268" stroke="#bbb" stroke-width="1"/><line x1="1751.0" y1="264" x2="1751.0" y2="268" stroke="#bbb" stroke-width="1"/><line x1="1759.6" y1="264" x2="1759.6" y2="268" stroke="#bbb" stroke-width="1"/><line x1="1768.1" y1="264" x2="1768.1" y2="268" stroke="#bbb" stroke-width="1"/><line x1="1776.7" y1="264" x2="1776.7" y2="268" stroke="#bbb" stroke-width="1"/><line x1="1785.3" y1="264" x2="1785.3" y2="268" stroke="#bbb" stroke-width="1"/><line x1="1793.9" y1="264" x2="1793.9" y2="268" stroke="#bbb" stroke-width="1"/><line x1="1802.5" y1="264" x2="1802.5" y2="268" stroke="#bbb" stroke-width="1"/><line x1="1811.1" y1="264" x2="1811.1" y2="268" stroke="#bbb" stroke-width="1"/><line x1="1819.7" y1="264" x2="1819.7" y2="268" stroke="#bbb" stroke-width="1"/><line x1="1828.2" y1="264" x2="1828.2" y2="268" stroke="#bbb" stroke-width="1"/><line x1="1836.8" y1="264" x2="1836.8" y2="268" stroke="#bbb" stroke-width="1"/><line x1="1845.4" y1="264" x2="1845.4" y2="268" stroke="#bbb" stroke-width="1"/><line x1="1854.0" y1="264" x2="1854.0" y2="268" stroke="#bbb" stroke-width="1"/><line x1="1862.6" y1="264" x2="1862.6" y2="268" stroke="#bbb" stroke-width="1"/><line x1="1871.2" y1="264" x2="1871.2" y2="268" stroke="#bbb" stroke-width="1"/><line x1="1879.8" y1="264" x2="1879.8" y2="268" stroke="#bbb" stroke-width="1"/><circle cx="1454.1" cy="248.3" r="1.6" fill="#2f86f6"/><circle cx="1462.7" cy="254.8" r="1.6" fill="#14c8d4"/><circle cx="1471.2" cy="249" r="1.6" fill="#f08a5d"/><circle cx="1479.8" cy="247.4" r="1.6" fill="#e680f2"/><circle cx="1488.4" cy="236.4" r="1.6" fill="#7a6cf0"/><circle cx="1496.9" cy="262.7" r="1.6" fill="#4fc64f"/><circle cx="1505.5" cy="258" r="1.6" fill="#d99a3a"/><circle cx="1514.1" cy="261.3" r="1.6" fill="#f58cc9"/><circle cx="1522.7" cy="260" r="1.6" fill="#1a9bcc"/><circle cx="1531.2" cy="249.5" r="1.6" fill="#2cc98a"/><circle cx="1539.8" cy="243.7" r="1.6" fill="#b8c21a"/><circle cx="1548.4" cy="261.3" r="1.6" fill="#c88af5"/><circle cx="1556.9" cy="251" r="1.6" fill="#2a84d8"/><circle cx="1565.5" cy="257" r="1.6" fill="#33d39a"/><circle cx="1574.1" cy="257.3" r="1.6" fill="#e0803a"/><circle cx="1582.6" cy="259.2" r="1.6" fill="#f07ad8"/><circle cx="1591.2" cy="215.3" r="1.6" fill="#5a5ee8"/><circle cx="1599.8" cy="245.3" r="1.6" fill="#a8d41a"/><circle cx="1608.4" cy="255.9" r="1.6" fill="#e3c21a"/><circle cx="1616.9" cy="258.8" r="1.6" fill="#f59ad8"/><circle cx="1625.5" cy="253.7" r="1.6" fill="#3a8cf0"/><circle cx="1634.1" cy="248.3" r="1.6" fill="#18c6d0"/><circle cx="1642.6" cy="217.2" r="1.6" fill="#2f86f6"/><circle cx="1651.2" cy="260.2" r="1.6" fill="#14c8d4"/><circle cx="1659.8" cy="254.3" r="1.6" fill="#f08a5d"/><circle cx="1668.3" cy="252.5" r="1.6" fill="#e680f2"/><circle cx="1676.9" cy="243.4" r="1.6" fill="#7a6cf0"/><circle cx="1685.5" cy="257.8" r="1.6" fill="#4fc64f"/><circle cx="1694.1" cy="225.5" r="1.6" fill="#d99a3a"/><circle cx="1702.6" cy="241.7" r="1.6" fill="#f58cc9"/><circle cx="1711.2" cy="234.6" r="1.6" fill="#1a9bcc"/><circle cx="1719.8" cy="259.6" r="1.6" fill="#2cc98a"/><circle cx="1728.3" cy="252.9" r="1.6" fill="#b8c21a"/><circle cx="1736.9" cy="260.6" r="1.6" fill="#c88af5"/><circle cx="1745.5" cy="260" r="1.6" fill="#2a84d8"/><circle cx="1754.0" cy="247" r="1.6" fill="#33d39a"/><circle cx="1762.6" cy="241.7" r="1.6" fill="#e0803a"/><circle cx="1771.2" cy="248.7" r="1.6" fill="#f07ad8"/><circle cx="1779.8" cy="259.6" r="1.6" fill="#5a5ee8"/><circle cx="1788.3" cy="255.7" r="1.6" fill="#a8d41a"/><circle cx="1796.9" cy="252.5" r="1.6" fill="#e3c21a"/><circle cx="1805.5" cy="258.9" r="1.6" fill="#f59ad8"/><circle cx="1814.0" cy="228" r="1.6" fill="#3a8cf0"/><circle cx="1822.6" cy="245.2" r="1.6" fill="#18c6d0"/><circle cx="1831.2" cy="257.5" r="1.6" fill="#2f86f6"/><circle cx="1839.8" cy="259.2" r="1.6" fill="#14c8d4"/><circle cx="1848.3" cy="249.7" r="1.6" fill="#f08a5d"/><circle cx="1856.9" cy="254" r="1.6" fill="#e680f2"/><circle cx="1865.5" cy="218.8" r="1.6" fill="#7a6cf0"/><circle cx="1874.0" cy="257.5" r="1.6" fill="#4fc64f"/></svg><div class="abs" style="left:-1361px;top:-76px;width:0;height:0"><div class="t" style="left:1393.5px;top:135.8px;font-size:12px;color:#333;font-weight:normal;">洋葱</div><div class="t" style="left:1446px;top:135.8px;font-size:12px;color:#333;font-weight:normal;">猕猴桃</div><div class="t" style="left:1511px;top:135.8px;font-size:12px;color:#333;font-weight:normal;">功能饮料</div><div class="t" style="left:1588px;top:135.8px;font-size:12px;color:#333;font-weight:normal;">膨化食品</div><div class="t" style="left:1665px;top:135.8px;font-size:12px;color:#333;font-weight:normal;">燕麦</div><div class="t" style="left:1718px;top:135.8px;font-size:12px;color:#333;font-weight:normal;">文件柜</div><div class="t" style="left:1783px;top:135.8px;font-size:12px;color:#333;font-weight:normal;">菠菜</div><div class="t" style="left:1393.5px;top:159.8px;font-size:12px;color:#333;font-weight:normal;">榴莲</div><div class="t" style="left:1446px;top:159.8px;font-size:12px;color:#333;font-weight:normal;">普洱茶</div><div class="t" style="left:1511px;top:159.8px;font-size:12px;color:#333;font-weight:normal;">话梅</div><div class="t" style="left:1565px;top:159.8px;font-size:12px;color:#333;font-weight:normal;">芝麻</div><div class="t" style="left:1617px;top:159.8px;font-size:12px;color:#333;font-weight:normal;">办公椅</div><div class="t" style="left:1682px;top:159.8px;font-size:12px;color:#333;font-weight:normal;">胡萝卜</div><div class="t" style="left:1747px;top:159.8px;font-size:12px;color:#333;font-weight:normal;">葡萄</div><div class="t" style="left:1799.5px;top:159.8px;font-size:12px;color:#333;font-weight:normal;">奶茶</div><div class="t" style="left:1393.5px;top:183.8px;font-size:12px;color:#333;font-weight:normal;">替片礼盒</div><div class="t" style="left:1470px;top:183.8px;font-size:12px;color:#333;font-weight:normal;">大豆</div><div class="t" style="left:1524px;top:183.8px;font-size:12px;color:#333;font-weight:normal;">订书机</div><div class="t" style="left:1589px;top:183.8px;font-size:12px;color:#333;font-weight:normal;">青椒</div><div class="t" style="left:1641px;top:183.8px;font-size:12px;color:#333;font-weight:normal;">草莓</div><div class="t" style="left:1694px;top:183.8px;font-size:12px;color:#333;font-weight:normal;">果汁</div><div class="t" style="left:1747px;top:183.8px;font-size:12px;color:#333;font-weight:normal;">夹心饼干</div><div class="t" style="left:1855.5px;top:160.5px;font-size:12px;color:#aaa;font-weight:normal;">1/3</div><div class="t" style="left:1047px;width:400px;text-align:right;top:215.5px;font-size:12px;color:#999;font-weight:normal;">800人</div><div class="t" style="left:1047px;width:400px;text-align:right;top:236.5px;font-size:12px;color:#999;font-weight:normal;">400人</div><div class="t" style="left:1047px;width:400px;text-align:right;top:257px;font-size:12px;color:#999;font-weight:normal;">0人</div><div class="t" style="left:1372.5px;top:251px;font-size:12px;color:#333;letter-spacing:0.9px;transform:rotate(-90deg);transform-origin:0 0">num</div><div class="t" style="left:1461.0px;top:272px;font-size:11.5px;color:#999;transform:rotate(90deg);transform-origin:0 0">洋葱月</div><div class="t" style="left:1478.1px;top:272px;font-size:11.5px;color:#999;transform:rotate(90deg);transform-origin:0 0">功能饮料月</div><div class="t" style="left:1495.3px;top:272px;font-size:11.5px;color:#999;transform:rotate(90deg);transform-origin:0 0">燕麦月</div><div class="t" style="left:1512.4px;top:272px;font-size:11.5px;color:#999;transform:rotate(90deg);transform-origin:0 0">菠菜月</div><div class="t" style="left:1529.5px;top:272px;font-size:11.5px;color:#999;transform:rotate(90deg);transform-origin:0 0">普洱茶月</div><div class="t" style="left:1546.7px;top:272px;font-size:11.5px;color:#999;transform:rotate(90deg);transform-origin:0 0">芝麻月</div><div class="t" style="left:1563.8px;top:272px;font-size:11.5px;color:#999;transform:rotate(90deg);transform-origin:0 0">胡萝卜月</div><div class="t" style="left:1580.9px;top:272px;font-size:11.5px;color:#999;transform:rotate(90deg);transform-origin:0 0">奶茶月</div><div class="t" style="left:1598.0px;top:272px;font-size:11.5px;color:#999;transform:rotate(90deg);transform-origin:0 0">大豆月</div><div class="t" style="left:1615.2px;top:272px;font-size:11.5px;color:#999;transform:rotate(90deg);transform-origin:0 0">青椒月</div><div class="t" style="left:1632.3px;top:272px;font-size:11.5px;color:#999;transform:rotate(90deg);transform-origin:0 0">果汁月</div><div class="t" style="left:1649.4px;top:272px;font-size:11.5px;color:#999;transform:rotate(90deg);transform-origin:0 0">小米月</div><div class="t" style="left:1666.6px;top:272px;font-size:11.5px;color:#999;transform:rotate(90deg);transform-origin:0 0">黄瓜月</div><div class="t" style="left:1683.7px;top:272px;font-size:11.5px;color:#999;transform:rotate(90deg);transform-origin:0 0">碳酸饮料月</div><div class="t" style="left:1700.8px;top:272px;font-size:11.5px;color:#999;transform:rotate(90deg);transform-origin:0 0">绿豆月</div><div class="t" style="left:1718.0px;top:272px;font-size:11.5px;color:#999;transform:rotate(90deg);transform-origin:0 0">精品有机红薯月</div><div class="t" style="left:1735.1px;top:272px;font-size:11.5px;color:#999;transform:rotate(90deg);transform-origin:0 0">黄心土豆月</div><div class="t" style="left:1752.2px;top:272px;font-size:11.5px;color:#999;transform:rotate(90deg);transform-origin:0 0">现磨咖啡月</div><div class="t" style="left:1769.3px;top:272px;font-size:11.5px;color:#999;transform:rotate(90deg);transform-origin:0 0">花生米月</div><div class="t" style="left:1786.5px;top:272px;font-size:11.5px;color:#999;transform:rotate(90deg);transform-origin:0 0">西兰花月</div><div class="t" style="left:1803.6px;top:272px;font-size:11.5px;color:#999;transform:rotate(90deg);transform-origin:0 0">冰红茶月</div><div class="t" style="left:1820.7px;top:272px;font-size:11.5px;color:#999;transform:rotate(90deg);transform-origin:0 0">黄玉米月</div><div class="t" style="left:1837.9px;top:272px;font-size:11.5px;color:#999;transform:rotate(90deg);transform-origin:0 0">新鲜西红柿月</div><div class="t" style="left:1855.0px;top:272px;font-size:11.5px;color:#999;transform:rotate(90deg);transform-origin:0 0">瓶装矿泉水月</div><div class="t" style="left:1872.1px;top:272px;font-size:11.5px;color:#999;transform:rotate(90deg);transform-origin:0 0">东北大米月</div></div>
</div>
<div class="card" id="c_cal" style="left:271px;top:380px;width:257px;height:440px">
<div class="ch"><div class="abs" style="left:12px;top:15px;line-height:0"><svg width="14" height="14" viewBox="0 0 14 14"><rect x="0.3" y="2" width="13" height="12" rx="0.8" fill="#1f7bff"/><g fill="#fff"><rect x="1.40" y="5.00" width="1.9" height="1.9"/><rect x="4.35" y="5.00" width="1.9" height="1.9"/><rect x="7.30" y="5.00" width="1.9" height="1.9"/><rect x="10.25" y="5.00" width="1.9" height="1.9"/><rect x="1.40" y="7.95" width="1.9" height="1.9"/><rect x="4.35" y="7.95" width="1.9" height="1.9"/><rect x="7.30" y="7.95" width="1.9" height="1.9"/><rect x="10.25" y="7.95" width="1.9" height="1.9"/><rect x="1.40" y="10.90" width="1.9" height="1.9"/><rect x="4.35" y="10.90" width="1.9" height="1.9"/><rect x="7.30" y="10.90" width="1.9" height="1.9"/><rect x="10.25" y="10.90" width="1.9" height="1.9"/></g><g fill="#1f7bff"><rect x="2.4" y="0.2" width="2.2" height="3.5" rx="1"/><rect x="8.6" y="0.2" width="2.2" height="3.5" rx="1"/></g><g fill="#cfe0ff"><rect x="3.1" y="1" width="0.8" height="2.2"/><rect x="9.3" y="1" width="0.8" height="2.2"/></g></svg></div><div class="t" style="left:34.5px;top:15px;font-size:14px;color:#222">日历时间</div></div>
<svg class="abs" style="left:0;top:0" width="257" height="440" viewBox="271 380 257 440"><g fill="none" stroke="#888" stroke-width="1.9"><path d="M299 443 L292.5 450.5 L299 458"/><path d="M307.5 443 L301 450.5 L307.5 458"/></g><path d="M333.5 443.5 L327 450.5 L333.5 457.5" fill="none" stroke="#888" stroke-width="1.9"/><path d="M465.5 443.5 L472 450.5 L465.5 457.5" fill="none" stroke="#888" stroke-width="1.9"/><g fill="none" stroke="#888" stroke-width="1.9"><path d="M492 443 L498.5 450.5 L492 458"/><path d="M500.5 443 L507 450.5 L500.5 458"/></g><rect x="271" y="470" width="257" height="1" fill="#e6e8eb"/><rect x="349" y="543" width="34" height="32" fill="#a3292a"/><circle cx="411" cy="515" r="2.6" fill="#3d7eff"/><circle cx="479.5" cy="643" r="2.6" fill="#3d7eff"/><circle cx="344.5" cy="675.5" r="2.6" fill="#3d7eff"/></svg><div class="abs" style="left:-271px;top:-380px;width:0;height:0"><div class="t" style="left:351px;top:444px;font-size:14px;color:#888;font-weight:normal;">2026 年</div><div class="t" style="left:422px;top:444px;font-size:14px;color:#888;font-weight:normal;">4 月</div><div class="t" style="left:97.5px;width:400px;text-align:center;top:489px;font-size:14px;color:#333;font-weight:normal;">日</div><div class="t" style="left:131.5px;width:400px;text-align:center;top:489px;font-size:14px;color:#333;font-weight:normal;">一</div><div class="t" style="left:165.5px;width:400px;text-align:center;top:489px;font-size:14px;color:#333;font-weight:normal;">二</div><div class="t" style="left:199.5px;width:400px;text-align:center;top:489px;font-size:14px;color:#333;font-weight:normal;">三</div><div class="t" style="left:233.5px;width:400px;text-align:center;top:489px;font-size:14px;color:#333;font-weight:normal;">四</div><div class="t" style="left:267.5px;width:400px;text-align:center;top:489px;font-size:14px;color:#333;font-weight:normal;">五</div><div class="t" style="left:301.5px;width:400px;text-align:center;top:489px;font-size:14px;color:#333;font-weight:normal;">六</div><div class="t" style="left:97.5px;width:400px;text-align:center;top:520px;font-size:14px;color:#c3c3c3;font-weight:normal;">29</div><div class="t" style="left:131.5px;width:400px;text-align:center;top:520px;font-size:14px;color:#c3c3c3;font-weight:normal;">30</div><div class="t" style="left:165.5px;width:400px;text-align:center;top:520px;font-size:14px;color:#c3c3c3;font-weight:normal;">31</div><div class="t" style="left:199.5px;width:400px;text-align:center;top:521px;font-size:12px;color:#555;font-weight:normal;">愚人</div><div class="t" style="left:233.5px;width:400px;text-align:center;top:520px;font-size:14px;color:#646464;font-weight:normal;">2</div><div class="t" style="left:267.5px;width:400px;text-align:center;top:520px;font-size:14px;color:#646464;font-weight:normal;">3</div><div class="t" style="left:301.5px;width:400px;text-align:center;top:520px;font-size:14px;color:#646464;font-weight:normal;">4</div><div class="t" style="left:97.5px;width:400px;text-align:center;top:552px;font-size:14px;color:#646464;font-weight:normal;">5</div><div class="t" style="left:131.5px;width:400px;text-align:center;top:552px;font-size:14px;color:#646464;font-weight:normal;">6</div><div class="t" style="left:165.5px;width:400px;text-align:center;top:552px;font-size:14px;color:#fff;font-weight:normal;">7</div><div class="t" style="left:199.5px;width:400px;text-align:center;top:552px;font-size:14px;color:#646464;font-weight:normal;">8</div><div class="t" style="left:233.5px;width:400px;text-align:center;top:552px;font-size:14px;color:#646464;font-weight:normal;">9</div><div class="t" style="left:267.5px;width:400px;text-align:center;top:552px;font-size:14px;color:#646464;font-weight:normal;">10</div><div class="t" style="left:301.5px;width:400px;text-align:center;top:552px;font-size:14px;color:#646464;font-weight:normal;">11</div><div class="t" style="left:97.5px;width:400px;text-align:center;top:584px;font-size:14px;color:#646464;font-weight:normal;">12</div><div class="t" style="left:131.5px;width:400px;text-align:center;top:584px;font-size:14px;color:#646464;font-weight:normal;">13</div><div class="t" style="left:165.5px;width:400px;text-align:center;top:584px;font-size:14px;color:#646464;font-weight:normal;">14</div><div class="t" style="left:199.5px;width:400px;text-align:center;top:584px;font-size:14px;color:#646464;font-weight:normal;">15</div><div class="t" style="left:233.5px;width:400px;text-align:center;top:584px;font-size:14px;color:#646464;font-weight:normal;">16</div><div class="t" style="left:267.5px;width:400px;text-align:center;top:584px;font-size:14px;color:#646464;font-weight:normal;">17</div><div class="t" style="left:301.5px;width:400px;text-align:center;top:584px;font-size:14px;color:#646464;font-weight:normal;">18</div><div class="t" style="left:97.5px;width:400px;text-align:center;top:616px;font-size:14px;color:#646464;font-weight:normal;">19</div><div class="t" style="left:131.5px;width:400px;text-align:center;top:616px;font-size:14px;color:#646464;font-weight:normal;">20</div><div class="t" style="left:165.5px;width:400px;text-align:center;top:616px;font-size:14px;color:#646464;font-weight:normal;">21</div><div class="t" style="left:199.5px;width:400px;text-align:center;top:616px;font-size:14px;color:#646464;font-weight:normal;">22</div><div class="t" style="left:233.5px;width:400px;text-align:center;top:616px;font-size:14px;color:#646464;font-weight:normal;">23</div><div class="t" style="left:267.5px;width:400px;text-align:center;top:616px;font-size:14px;color:#646464;font-weight:normal;">24</div><div class="t" style="left:301.5px;width:400px;text-align:center;top:616px;font-size:14px;color:#646464;font-weight:normal;">25</div><div class="t" style="left:97.5px;width:400px;text-align:center;top:648px;font-size:14px;color:#646464;font-weight:normal;">26</div><div class="t" style="left:131.5px;width:400px;text-align:center;top:648px;font-size:14px;color:#646464;font-weight:normal;">27</div><div class="t" style="left:165.5px;width:400px;text-align:center;top:648px;font-size:14px;color:#646464;font-weight:normal;">28</div><div class="t" style="left:199.5px;width:400px;text-align:center;top:648px;font-size:14px;color:#646464;font-weight:normal;">29</div><div class="t" style="left:233.5px;width:400px;text-align:center;top:648px;font-size:14px;color:#646464;font-weight:normal;">30</div><div class="t" style="left:267.5px;width:400px;text-align:center;top:649px;font-size:12px;color:#c3c3c3;font-weight:normal;">劳动</div><div class="t" style="left:301.5px;width:400px;text-align:center;top:648px;font-size:14px;color:#c3c3c3;font-weight:normal;">2</div><div class="t" style="left:97.5px;width:400px;text-align:center;top:680px;font-size:14px;color:#c3c3c3;font-weight:normal;">3</div><div class="t" style="left:131.5px;width:400px;text-align:center;top:681px;font-size:12px;color:#c3c3c3;font-weight:normal;">青年</div><div class="t" style="left:165.5px;width:400px;text-align:center;top:680px;font-size:14px;color:#c3c3c3;font-weight:normal;">5</div><div class="t" style="left:199.5px;width:400px;text-align:center;top:680px;font-size:14px;color:#c3c3c3;font-weight:normal;">6</div><div class="t" style="left:233.5px;width:400px;text-align:center;top:680px;font-size:14px;color:#c3c3c3;font-weight:normal;">7</div><div class="t" style="left:267.5px;width:400px;text-align:center;top:680px;font-size:14px;color:#c3c3c3;font-weight:normal;">8</div><div class="t" style="left:301.5px;width:400px;text-align:center;top:680px;font-size:14px;color:#c3c3c3;font-weight:normal;">9</div></div>
</div>
<div class="card" id="c_d1" style="left:544px;top:380px;width:256px;height:211px">
<div class="ch"><div class="abs" style="left:12px;top:15.5px;line-height:0"><svg width="16" height="12" viewBox="0 0 16 12"><g fill="none" stroke="#1f7bff" stroke-width="1.1" stroke-linecap="round"><path d="M2.6 0.9 H15.4 V10.6 H1.6 Q0.8 10.6 0.8 9.8 V2 H2.6 V10.5"/><rect x="4.6" y="2.4" width="3.6" height="3.6" rx="0.4"/><path d="M10.4 2.6 H13.6 M10.4 4.6 H13.6 M10.4 6.6 H13.6 M4.6 8.6 H8.2 M10.4 8.6 H13.6"/></g></svg></div><div class="t" style="left:34.5px;top:15px;font-size:14px;color:#222">数据卡片</div></div>
<div class="abs" style="left:-544px;top:-380px;width:0;height:0"><div class="t" style="left:472.5px;width:400px;text-align:center;top:468px;font-size:32px;color:#1e80ff;font-weight:bold;transform:scaleY(1.04);transform-origin:50% 0">135</div><div class="t" style="left:472.5px;width:400px;text-align:center;top:510px;font-size:14px;color:#6b7280;font-weight:normal;">数据指标</div><div class="t" style="left:472.5px;width:400px;text-align:center;top:537px;font-size:12px;color:#19be6b;font-weight:normal;"><svg width="11" height="11" viewBox="0 0 11 11" style="vertical-align:-1px;margin-right:3px"><path d="M5.5 10.5 V2.5 M1.3 6 L5.5 1.8 L9.7 6" fill="none" stroke="#19be6b" stroke-width="2.3"/></svg>1.7 %</div></div>
</div>
<div class="card" id="c_d2" style="left:544px;top:608px;width:256px;height:212px">
<div class="ch"><div class="abs" style="left:12px;top:15.5px;line-height:0"><svg width="16" height="12" viewBox="0 0 16 12"><g fill="none" stroke="#1f7bff" stroke-width="1.1" stroke-linecap="round"><path d="M2.6 0.9 H15.4 V10.6 H1.6 Q0.8 10.6 0.8 9.8 V2 H2.6 V10.5"/><rect x="4.6" y="2.4" width="3.6" height="3.6" rx="0.4"/><path d="M10.4 2.6 H13.6 M10.4 4.6 H13.6 M10.4 6.6 H13.6 M4.6 8.6 H8.2 M10.4 8.6 H13.6"/></g></svg></div><div class="t" style="left:34.5px;top:15px;font-size:14px;color:#222">数据卡片</div></div>
<div class="abs" style="left:-544px;top:-608px;width:0;height:0"><div class="t" style="left:472.5px;width:400px;text-align:center;top:696px;font-size:32px;color:#1e80ff;font-weight:bold;transform:scaleY(1.04);transform-origin:50% 0">166</div><div class="t" style="left:472.5px;width:400px;text-align:center;top:738px;font-size:14px;color:#6b7280;font-weight:normal;">数据指标</div><div class="t" style="left:472.5px;width:400px;text-align:center;top:765px;font-size:12px;color:#ec3f3f;font-weight:normal;"><svg width="11" height="11" viewBox="0 0 11 11" style="vertical-align:-1px;margin-right:3px"><path d="M5.5 0.5 V8.5 M1.3 5 L5.5 9.2 L9.7 5" fill="none" stroke="#ec3f3f" stroke-width="2.3"/></svg>8.7 %</div></div>
</div>
<div class="card" id="c_bar" style="left:271px;top:836px;width:529px;height:300px">
<div class="ch"><div class="abs" style="left:12px;top:16px;line-height:0"><svg width="16" height="13" viewBox="0 0 16 13"><path d="M0.6 0.3 V11.4 H15.8" fill="none" stroke="#1f7bff" stroke-width="1.1" stroke-linecap="round"/><g fill="#1f7bff"><rect x="3.1" y="6.1" width="1.9" height="3.5" rx="0.5"/><rect x="6.1" y="2.2" width="1.9" height="7.4" rx="0.5"/><rect x="9.1" y="4.2" width="1.9" height="5.4" rx="0.5"/><rect x="12.2" y="1.1" width="1.9" height="8.5" rx="0.5"/></g></svg></div><div class="t" style="left:34.5px;top:15px;font-size:14px;color:#222">柱状图</div></div>

</div>
<div class="card" id="c_map" style="left:816px;top:456px;width:529px;height:500px">
<div class="ch"><div class="abs" style="left:12px;top:15px;line-height:0"><svg width="14" height="14" viewBox="0 0 14 14"><circle cx="6.1" cy="6.9" r="6.1" fill="#1f7bff"/><path d="M2.1 3.9 Q3.6 2.4 5.6 2.3 L6.2 3.2 L8.8 3.1 Q7.6 5.4 6.6 6.6 Q5.4 7.8 5.9 8.7 Q4.8 8.6 3.8 7.2 Q2.9 5.6 2.1 3.9 Z" fill="#fff"/><path d="M7.2 10.3 Q8.8 9.2 10.3 9.3 Q9.5 10.9 7.7 11.3 Z" fill="#fff"/></svg></div><div class="t" style="left:34.5px;top:15px;font-size:14px;color:#222">地图</div></div>
<svg class="abs" style="left:0;top:0" width="529" height="500" viewBox="816 456 529 500"><path d="M977.1 629.1 L978.1 626.9 L979.1 624.6 L981.5 623.3 L981.6 620.5 L983.9 619.2 L984.9 616.9 L985.6 614.5 L987.8 613.1 L986.8 611.1 L984.7 609.7 L984.5 607.3 L982.6 605.8 L981.6 603.8 L981.4 601.3 L981.4 598.9 L982.6 596.7 L981.1 594.2 L981.6 591.8 L982.5 589.5 L981.0 587.6 L979.8 585.3 L977.5 584.3 L975.4 582.9 L973.9 581.0 L976.4 580.2 L976.3 577.0 L979.4 576.8 L980.3 574.6 L982.5 573.4 L984.8 572.4 L987.1 571.7 L989.6 571.5 L992.1 571.4 L994.3 570.0 L994.7 567.1 L997.1 565.9 L998.5 563.9 L999.2 561.4 L998.9 558.8 L999.6 556.4 L1001.8 555.4 L1003.4 553.3 L1005.5 552.2 L1007.8 551.4 L1010.5 551.4 L1012.4 549.8 L1014.4 548.5 L1016.7 547.8 L1018.2 549.8 L1020.0 551.5 L1021.9 553.1 L1023.1 555.3 L1024.6 557.5 L1026.8 558.9 L1029.4 559.6 L1030.9 561.9 L1032.9 563.4 L1034.9 564.9 L1036.8 563.2 L1037.6 560.9 L1037.7 558.3 L1040.3 556.9 L1040.3 554.2 L1042.2 552.3 L1044.8 551.9 L1047.5 551.6 L1049.2 549.2 L1051.8 548.9 L1054.2 547.8 L1056.7 546.9 L1058.9 548.8 L1061.3 549.3 L1063.8 548.9 L1065.0 546.5 L1066.8 544.3 L1067.0 541.4 L1069.3 540.4 L1071.9 540.8 L1074.3 540.0 L1076.7 539.4 L1079.0 538.6 L1081.7 539.0 L1084.1 538.7 L1086.3 537.1 L1086.5 534.7 L1087.2 532.3 L1086.0 529.8 L1087.4 527.5 L1085.4 526.0 L1083.1 525.3 L1085.4 524.0 L1088.1 523.1 L1090.0 521.2 L1091.6 518.9 L1094.9 518.9 L1098.1 520.0 L1100.9 519.7 L1103.8 520.4 L1106.6 520.0 L1108.6 518.0 L1111.4 518.3 L1113.6 516.8 L1116.2 516.8 L1118.8 518.0 L1120.8 519.7 L1121.4 522.9 L1123.7 524.3 L1124.4 527.0 L1123.8 529.7 L1123.2 532.3 L1122.7 535.0 L1120.6 536.3 L1120.8 539.3 L1118.8 540.7 L1117.3 542.5 L1117.7 544.6 L1117.5 547.0 L1118.2 549.1 L1119.5 551.0 L1120.8 553.5 L1123.7 554.2 L1125.2 556.4" fill="none" stroke="#7d7d7d" stroke-width="0.85" stroke-linejoin="round"/><path d="M1125.4 560.0 L1126.5 562.2 L1127.5 564.5 L1127.2 567.3 L1127.9 569.6 L1130.7 571.2 L1130.7 573.8 L1131.9 576.4 L1132.2 579.1 L1132.6 581.8 L1132.3 584.6 L1131.0 587.2 L1129.5 589.6 L1128.4 592.3 L1131.1 593.6 L1133.8 594.9 L1135.4 597.7 L1137.5 595.2 L1140.0 593.1 L1142.4 593.5 L1144.5 594.7 L1146.5 596.4 L1149.2 596.1 L1150.7 600.0 L1153.4 600.8 L1156.1 600.8 L1158.8 601.4 L1161.5 601.5" fill="none" stroke="#7d7d7d" stroke-width="0.85" stroke-linejoin="round"/><path d="M1161.5 601.5 L1163.1 599.9 L1163.0 597.2 L1166.0 596.5 L1167.0 594.5 L1167.6 592.3 L1170.5 592.4 L1173.0 591.5 L1175.3 590.0 L1177.5 588.6 L1179.9 587.7 L1180.2 584.8 L1180.0 581.9 L1181.5 579.2 L1184.7 578.4 L1187.6 576.9 L1190.5 576.2 L1193.0 577.7 L1194.3 579.9 L1194.2 582.2 L1193.8 584.6 L1195.8 586.2 L1196.7 588.5 L1197.6 590.7 L1198.5 593.1 L1198.5 595.5 L1197.9 597.7 L1196.8 600.0 L1199.0 601.3 L1199.7 603.6 L1201.7 605.1 L1201.2 608.2 L1203.0 609.7 L1204.5 611.5 L1207.5 610.2 L1210.7 610.7 L1212.3 609.0 L1214.3 608.1 L1216.3 607.0 L1218.4 606.1 L1220.5 604.8 L1223.0 605.3 L1225.0 606.9 L1227.6 606.9 L1230.3 606.3 L1231.4 603.7 L1233.3 602.2 L1235.3 600.7 L1238.0 599.5 L1240.8 599.2 L1243.7 600.0 L1246.4 600.6 L1249.1 601.5 L1251.4 603.0 L1252.0 605.5 L1254.7 606.7 L1255.3 609.2 L1257.4 611.3 L1256.3 614.7 L1258.3 616.9 L1257.5 619.2 L1256.8 621.5 L1258.8 624.3 L1259.1 627.6 L1257.2 629.1 L1256.3 631.6 L1253.7 632.3 L1251.2 631.7 L1248.8 630.1 L1246.0 630.7 L1244.4 633.0 L1244.0 635.7 L1243.7 638.4 L1242.7 641.0 L1240.7 643.0 L1243.0 642.8 L1245.3 642.5 L1247.5 644.2 L1249.9 643.7 L1252.2 643.8 L1255.3 646.1 L1252.7 645.7 L1250.4 647.1 L1248.0 647.7 L1245.3 646.5 L1243.0 647.6 L1240.2 646.6 L1237.5 647.1 L1234.8 647.4 L1232.2 648.4 L1229.5 648.8 L1227.6 650.7 L1228.1 653.0 L1230.3 654.5 L1230.7 656.8 L1233.7 659.9 L1233.3 662.6 L1233.3 665.4 L1233.8 668.2 L1232.2 670.7 L1232.2 673.3 L1230.6 675.0 L1229.1 676.8 L1227.5 679.3 L1224.7 680.6 L1223.0 683.0 L1220.2 683.6 L1219.0 686.2 L1216.8 687.6 L1214.3 686.9 L1212.0 687.2 L1209.7 687.6 L1207.6 689.1" fill="none" stroke="#7d7d7d" stroke-width="0.85" stroke-linejoin="round"/><path d="M1161.5 601.5 L1162.3 604.6 L1161.3 607.3 L1160.3 610.0 L1158.4 612.3 L1159.6 614.7 L1160.2 617.2 L1160.0 620.0 L1157.9 621.4 L1155.3 621.5 L1154.3 624.5 L1153.8 627.6 L1151.6 629.8 L1150.5 632.4 L1150.0 635.3 L1148.0 633.1 L1146.1 630.7 L1143.3 630.1 L1140.5 629.5 L1137.7 629.9 L1135.2 627.8 L1134.6 624.6 L1133.1 626.7 L1132.3 629.2 L1130.3 630.6 L1129.4 632.7 L1128.3 634.6 L1127.7 636.9 L1126.2 638.6 L1125.2 640.9 L1122.5 641.6 L1121.5 643.8 L1119.0 644.2 L1116.4 643.0 L1113.8 643.8 L1111.9 646.3 L1112.5 649.5 L1111.5 652.2 L1109.8 654.0 L1107.7 655.3 L1106.0 657.5 L1105.9 660.1 L1106.6 662.9 L1106.1 665.4 L1104.6 667.6 L1105.7 669.8 L1104.1 672.3 L1104.6 674.6 L1106.5 676.7 L1105.1 679.2 L1106.1 681.4 L1104.2 683.2 L1104.2 685.6 L1104.2 688.0 L1103.0 690.0 L1102.3 692.2 L1103.5 694.7 L1104.0 697.3 L1103.1 700.0" fill="none" stroke="#7d7d7d" stroke-width="0.85" stroke-linejoin="round"/><path d="M960.0 638.8 L962.7 638.8 L964.4 637.0 L966.5 635.6 L969.0 635.5 L970.6 633.3 L973.3 633.2 L975.3 632.0 L977.1 630.2 L979.9 629.1 L982.8 628.9 L985.7 629.1 L987.9 630.0 L989.9 631.2 L991.3 633.2 L993.7 633.8 L995.3 635.6 L995.8 633.4 L995.9 631.0 L997.5 629.1 L998.7 631.2 L1001.3 631.3 L1003.0 632.7 L1004.7 634.2 L1006.1 636.1 L1008.6 636.3 L1010.3 637.7 L1011.2 640.0 L1013.5 640.9 L1015.1 642.6 L1016.7 644.1 L1018.1 645.9 L1020.6 646.8 L1021.2 649.2 L1023.2 650.6 L1025.0 652.0 L1025.0 655.0 L1027.6 655.8 L1028.5 658.0 L1027.7 660.2 L1026.3 662.1 L1025.8 664.4 L1025.5 666.8 L1024.2 668.7 L1026.3 670.2 L1028.4 671.7 L1030.6 673.0 L1033.3 673.3 L1035.6 671.2 L1038.4 671.9 L1040.8 670.7 L1043.5 670.9 L1045.1 673.1 L1045.0 676.0 L1046.7 678.1 L1047.8 680.5 L1049.8 681.5 L1051.8 682.7 L1053.8 683.9 L1056.3 683.7 L1057.7 685.6 L1058.7 687.7 L1060.2 689.5 L1061.4 691.4 L1062.7 693.4 L1064.7 694.5 L1067.1 694.5 L1069.1 695.4 L1071.3 695.9 L1073.4 696.6 L1075.9 697.0 L1077.9 695.8 L1080.1 695.5 L1082.3 695.1 L1084.1 693.4 L1086.5 693.6 L1088.4 695.1 L1090.2 696.8 L1092.7 696.6 L1094.5 698.2 L1097.3 697.3 L1099.5 698.1 L1101.3 699.8" fill="none" stroke="#7d7d7d" stroke-width="0.85" stroke-linejoin="round"/><path d="M1080.0 692.3 L1082.4 692.9 L1084.9 692.8 L1087.1 694.0 L1089.6 694.3 L1091.4 696.5 L1093.8 696.9 L1096.5 697.3 L1099.1 697.4 L1101.5 696.1 L1104.0 697.2 L1104.8 699.9 L1106.8 701.5 L1109.5 702.2 L1110.7 704.6 L1113.1 707.7" fill="none" stroke="#7d7d7d" stroke-width="0.85" stroke-linejoin="round"/><path d="M977.6 630.2 L975.1 630.1 L972.7 630.7 L971.1 633.3 L968.2 632.3 L966.4 634.5 L964.1 635.1 L961.4 634.7 L959.3 635.9 L957.3 637.5 L955.4 639.0 L953.0 639.1 L950.7 639.6 L948.7 640.7 L946.6 641.8 L944.2 641.8 L943.4 644.2 L941.3 645.9 L941.6 648.9 L939.2 650.5 L938.3 652.8 L936.9 654.9 L937.6 657.6 L936.4 659.8 L935.2 662.1 L934.9 664.6 L935.6 667.2 L934.0 669.5 L933.6 672.0 L934.8 674.0 L935.1 676.4 L937.8 677.9 L938.2 680.2 L939.5 682.2 L938.4 684.9 L939.8 686.9 L938.8 689.3 L937.7 691.5 L935.6 693.1 L933.2 694.5 L932.5 697.1 L930.5 698.3 L930.1 700.9 L928.8 702.8 L925.9 703.2 L925.1 705.5 L923.8 707.3 L924.3 709.7 L926.7 711.2 L927.7 713.4 L927.3 716.2 L928.8 718.1 L929.6 720.4 L929.1 723.0 L925.8 723.8 L925.0 726.3 L923.2 728.1 L922.4 730.5" fill="none" stroke="#7d7d7d" stroke-width="0.85" stroke-linejoin="round"/><path d="M977.6 630.2 L977.0 627.5 L979.2 625.2 L977.7 622.4 L979.1 620.0" fill="none" stroke="#7d7d7d" stroke-width="0.85" stroke-linejoin="round"/><path d="M922.4 730.5 L924.4 731.7 L926.7 731.0 L929.0 731.0 L931.1 731.8 L933.1 733.1 L935.5 731.7 L937.8 731.7 L939.8 732.9 L942.1 732.5 L944.2 733.5 L946.4 734.8 L947.8 736.8 L949.4 738.6 L950.6 740.8 L951.8 742.9 L953.3 744.8 L953.8 747.4 L956.2 748.7 L957.3 750.9 L959.7 750.2 L961.9 748.7 L964.4 748.4 L966.6 746.8 L969.2 746.7 L971.8 746.5 L974.0 748.0 L973.5 750.8 L975.0 752.6 L976.9 754.2 L977.3 756.5 L977.4 759.1 L980.3 760.1 L980.5 762.5 L981.4 764.8 L983.6 765.8 L984.9 767.6 L985.7 769.9 L988.0 770.9 L989.3 772.7 L990.4 770.6 L991.9 768.6 L993.6 766.7 L993.3 763.8 L995.5 762.2 L996.3 759.9 L997.2 757.6 L998.0 755.3 L999.9 756.5 L1001.7 757.9 L1003.9 758.8 L1005.6 760.4 L1006.7 762.5 L1009.3 762.2 L1011.1 764.4 L1013.7 763.9 L1016.0 764.3 L1018.3 764.8 L1020.1 767.2 L1022.3 768.0 L1024.7 768.1 L1027.1 768.4 L1029.0 770.1 L1030.5 772.1 L1031.9 774.2 L1033.0 776.5 L1034.4 778.5" fill="none" stroke="#7d7d7d" stroke-width="0.85" stroke-linejoin="round"/><path d="M1034.4 778.5 L1037.0 778.1 L1039.5 779.1 L1042.1 779.1 L1044.5 780.0 L1047.2 779.7 L1049.3 778.5 L1050.8 776.4 L1052.5 774.5 L1055.5 774.8 L1056.8 772.1 L1059.1 771.3 L1058.3 768.9 L1056.9 766.7 L1057.3 764.1 L1057.1 761.6 L1056.7 759.2 L1056.2 756.7 L1056.0 754.2 L1057.4 752.1 L1056.7 749.4 L1057.9 747.3 L1059.1 745.1 L1061.3 743.6 L1063.9 743.9 L1066.1 742.5 L1068.6 742.0 L1071.1 742.2 L1073.6 742.2 L1075.7 741.2 L1078.0 741.7 L1080.2 741.2 L1082.5 741.3 L1084.6 740.8 L1086.8 740.5 L1089.1 740.6 L1091.1 739.3 L1093.4 739.7 L1095.6 740.3 L1097.3 742.6 L1099.8 742.2 L1102.2 740.7 L1105.0 741.6 L1107.5 740.8 L1110.0 739.9" fill="none" stroke="#7d7d7d" stroke-width="0.85" stroke-linejoin="round"/><path d="M922.4 730.5 L921.2 732.8 L918.2 732.5 L916.2 733.7 L914.8 735.6 L912.8 736.7 L910.8 737.8 L909.9 740.5 L907.5 741.1 L905.7 742.4 L903.4 743.1 L902.0 745.1 L900.6 747.0 L899.8 749.2 L899.6 751.6 L898.2 753.5 L897.9 755.9 L897.2 758.0 L897.5 760.6 L896.2 762.5 L896.8 765.0 L896.1 767.1 L895.1 769.2 L895.2 771.5 L892.9 773.3 L893.1 775.6 L892.5 777.7 L892.0 779.9 L891.4 782.1 L891.4 784.4 L892.1 786.8 L890.4 788.7 L888.5 790.3 L887.3 792.3 L886.5 794.5 L885.1 796.4 L883.6 798.2 L883.5 801.0 L880.8 802.0 L880.5 804.6 L878.7 806.2 L880.1 808.4 L879.9 810.8 L879.0 813.2 L880.6 815.4 L879.6 817.9 L879.3 820.3 L880.8 822.5 L881.3 824.8 L881.4 827.1 L881.6 829.5 L883.8 831.0 L886.0 832.4 L888.5 833.2 L890.8 834.4 L893.3 835.3 L895.9 834.7 L898.3 835.4 L900.7 836.1 L902.9 837.8 L905.5 837.2 L907.8 838.2 L910.2 838.4 L912.7 837.0 L915.1 837.1 L917.5 837.6 L919.9 838.6 L922.4 838.2 L922.7 840.4 L923.6 842.5 L925.3 844.2 L925.6 846.5 L926.6 848.5 L927.4 850.6 L928.2 852.7 L930.5 853.4 L931.0 856.4 L933.9 856.5 L934.4 859.5 L936.9 860.0 L939.5 860.9 L941.8 858.4 L944.4 859.3 L946.9 860.0 L949.5 860.1 L951.9 858.6 L954.4 858.5 L956.0 860.5 L957.2 862.6 L956.6 865.6 L959.4 866.9 L959.6 869.5 L961.7 871.2 L961.9 873.8 L963.1 876.0 L964.5 879.0 L967.5 880.4" fill="none" stroke="#7d7d7d" stroke-width="0.85" stroke-linejoin="round"/><path d="M1034.4 778.5 L1033.7 781.1 L1030.8 782.2 L1030.0 784.6 L1027.8 786.1 L1027.1 788.7 L1025.9 790.7 L1026.3 793.3 L1024.0 795.0 L1024.2 797.5 L1024.6 800.0 L1023.9 802.2 L1022.0 804.0 L1021.3 806.2 L1019.4 808.2 L1017.7 810.4 L1015.5 812.0 L1015.5 814.4 L1014.2 816.3 L1013.4 818.4 L1011.3 820.0 L1012.5 822.9 L1009.9 824.2 L1009.6 826.5 L1007.1 825.9 L1004.9 828.0 L1002.3 826.2 L999.9 827.0 L997.4 826.8 L995.1 828.0 L993.4 829.7 L991.4 830.7 L989.4 831.9 L986.7 831.8 L985.3 833.9 L983.5 835.3 L982.6 837.8 L981.3 840.0 L980.5 842.5 L979.8 845.1 L977.6 846.9 L977.9 849.4 L975.4 851.0 L976.0 853.6 L973.7 855.3 L974.6 858.0 L973.8 860.2 L972.5 862.2 L971.8 864.4 L971.9 866.9 L970.9 869.0 L968.8 870.9 L968.4 873.3 L967.9 875.6 L967.8 878.0 L967.5 880.4" fill="none" stroke="#7d7d7d" stroke-width="0.85" stroke-linejoin="round"/><path d="M1021.3 806.2 L1022.2 808.5 L1023.7 810.2 L1026.0 811.1 L1027.3 813.0 L1030.1 813.5 L1030.6 816.3 L1032.7 817.4 L1033.8 819.6 L1035.8 820.7 L1034.3 822.6 L1033.8 825.2 L1033.0 827.5 L1029.9 828.5 L1030.4 831.6 L1028.4 833.2 L1027.1 835.3 L1029.5 835.0 L1032.0 835.1 L1034.3 836.4 L1036.7 837.1 L1039.3 835.5 L1041.6 836.6 L1044.1 835.9 L1046.5 836.7 L1048.9 836.7" fill="none" stroke="#7d7d7d" stroke-width="0.85" stroke-linejoin="round"/><path d="M1030.0 838.9 L1032.2 838.1 L1034.2 837.0 L1036.5 836.4 L1038.9 836.7 L1041.1 835.8 L1043.4 837.3 L1045.6 836.1 L1047.8 836.0 L1050.9 836.0 L1053.7 837.4" fill="none" stroke="#7d7d7d" stroke-width="0.85" stroke-linejoin="round"/><path d="M1101.1 764.1 L1099.2 766.0 L1098.0 768.3 L1098.3 771.2 L1098.0 773.8 L1096.9 776.1 L1095.2 778.2 L1096.2 780.6 L1095.6 783.1 L1095.2 785.6 L1097.2 787.3 L1098.0 789.7 L1099.1 792.0 L1099.7 794.5 L1100.4 797.4 L1103.0 798.0 L1105.5 799.1 L1108.1 799.2 L1110.8 798.9 L1111.7 800.9 L1112.5 803.0 L1112.9 805.2 L1114.0 807.1 L1114.5 809.3 L1116.7 807.5 L1118.9 805.4 L1121.9 804.8 L1124.3 803.6 L1127.4 804.5 L1129.4 801.7 L1132.3 801.9 L1134.5 801.3 L1136.8 801.1 L1139.2 801.1 L1141.2 799.7 L1142.6 803.4 L1140.6 804.8 L1138.2 804.8 L1140.6 805.0 L1142.6 806.3 L1144.2 808.0 L1144.8 810.2 L1145.6 812.2 L1148.6 813.7 L1150.8 812.9 L1153.0 812.2 L1156.0 810.8 L1157.5 807.8 L1160.6 807.9 L1163.4 806.3 L1166.0 805.0 L1166.5 801.5 L1169.3 800.4 L1166.4 799.9 L1165.2 797.0 L1163.2 795.1 L1160.4 794.5 L1158.2 793.0 L1156.1 791.3 L1153.1 791.1 L1151.5 788.5 L1152.3 786.4 L1154.5 785.1 L1154.5 782.6 L1157.7 782.3 L1160.4 780.4" fill="none" stroke="#7d7d7d" stroke-width="0.85" stroke-linejoin="round"/><path d="M1132.3 801.9 L1132.2 804.4 L1133.7 806.3 L1134.2 809.2 L1136.7 810.8 L1135.3 812.7 L1133.6 814.5 L1131.7 815.9 L1129.3 816.7 L1131.5 819.0 L1133.7 821.1 L1136.8 820.8 L1139.7 819.7 L1138.8 822.0 L1139.5 824.2 L1139.9 826.4 L1140.4 828.6 L1138.0 828.7 L1136.0 830.1 L1133.7 830.8 L1132.3 834.5 L1135.2 835.0 L1138.2 835.2 L1136.0 836.8 L1133.3 835.4 L1131.2 837.2 L1128.5 836.0 L1126.3 837.4 L1123.8 837.6 L1121.5 838.9 L1118.9 838.9 L1116.7 839.9 L1114.5 839.5 L1112.3 838.9 L1112.4 836.7 L1112.4 834.4 L1110.7 832.3 L1111.5 830.0 L1113.0 829.3 L1110.8 833.0 L1111.7 835.3 L1110.3 837.4 L1110.0 839.7 L1110.0 841.9 L1112.3 842.4 L1114.7 842.7 L1116.6 844.4 L1118.9 844.9 L1119.1 847.8 L1117.4 850.0 L1116.0 852.3 L1114.0 853.8 L1111.3 854.3 L1110.0 856.7 L1109.7 859.7 L1110.0 862.6 L1107.8 864.0 L1107.1 866.6 L1105.6 868.6 L1103.6 866.7 L1102.6 864.1 L1100.0 862.8 L1098.2 860.4 L1096.1 858.9 L1093.7 859.7 L1094.2 856.7 L1093.7 853.7 L1092.6 856.0 L1091.7 858.4 L1089.3 859.7 L1087.8 861.9 L1086.3 864.1" fill="none" stroke="#7d7d7d" stroke-width="0.85" stroke-linejoin="round"/><path d="M1049.3 873.0 L1051.0 874.4 L1053.3 874.8 L1055.2 876.0 L1057.4 876.4 L1059.0 878.3 L1061.1 878.9" fill="none" stroke="#7d7d7d" stroke-width="0.85" stroke-linejoin="round"/><path d="M1074.5 878.9 L1076.8 877.6 L1076.9 874.6 L1078.9 873.0 L1081.4 873.0 L1083.0 874.6 L1084.8 876.0 L1086.2 873.9 L1088.2 872.3 L1089.3 870.1 L1092.4 870.1 L1095.2 871.5 L1093.8 874.3 L1093.7 877.5 L1091.2 878.4 L1089.3 880.4" fill="none" stroke="#7d7d7d" stroke-width="0.85" stroke-linejoin="round"/><path d="M1186.1 663.0 L1188.1 662.0 L1189.9 660.3 L1192.2 659.9 L1195.6 660.3 L1198.4 658.4 L1199.4 660.9 L1198.6 663.7 L1199.9 666.1 L1202.4 664.9 L1204.9 664.4 L1207.6 664.5 L1207.9 662.1 L1206.3 660.0 L1207.6 657.4 L1206.1 655.3 L1208.4 655.3 L1210.7 655.3 L1210.8 658.0 L1210.1 660.4 L1209.0 662.7 L1207.8 665.0 L1207.6 667.6 L1204.6 667.6 L1202.8 670.5 L1199.9 670.7 L1197.7 670.3 L1195.4 670.1 L1193.8 667.7 L1191.1 669.1 L1189.2 667.6 L1186.7 665.9 L1186.1 663.0" fill="none" stroke="#7d7d7d" stroke-width="0.85" stroke-linejoin="round"/><path d="M1187.6 676.8 L1189.8 674.8 L1192.7 674.5 L1195.3 673.8 L1197.6 675.1 L1200.1 675.3 L1202.6 675.3 L1205.0 676.2 L1207.6 675.3 L1210.1 674.6 L1211.0 671.9 L1212.6 670.1 L1215.7 670.0 L1216.8 667.6 L1219.3 666.0 L1220.1 662.7 L1223.0 661.5 L1225.4 661.1 L1227.5 659.6 L1229.8 658.9 L1232.2 658.4 L1233.6 660.8 L1235.0 663.2 L1235.3 666.1 L1235.2 668.6 L1233.4 670.2 L1232.1 672.0 L1230.7 673.8 L1228.2 673.3 L1226.6 675.9 L1223.9 674.5 L1222.3 676.9 L1219.9 676.8 L1218.3 678.4 L1215.8 678.6 L1213.9 679.9 L1212.6 681.9 L1210.7 683.0 L1209.1 681.4 L1209.8 678.9 L1212.2 677.7 L1213.5 675.7 L1216.1 674.7 L1216.8 672.2 L1218.2 670.1 L1220.3 668.9 L1223.0 668.4 L1223.5 665.2 L1226.1 664.5" fill="none" stroke="#7d7d7d" stroke-width="0.85" stroke-linejoin="round"/><path d="M1195.3 670.7 L1198.4 670.1 L1201.5 669.9 L1203.0 673.0 L1199.7 673.0 L1196.8 674.5 L1195.3 670.7" fill="none" stroke="#7d7d7d" stroke-width="0.85" stroke-linejoin="round"/><path d="M1213.8 666.1 L1215.9 667.5 L1218.4 667.6 L1217.8 670.6 L1215.3 672.2 L1212.2 670.7 L1211.9 668.0 L1213.8 666.1" fill="none" stroke="#7d7d7d" stroke-width="0.85" stroke-linejoin="round"/><path d="M1089.2 749.2 L1089.5 746.7 L1091.2 744.7 L1091.5 742.2 L1095.4 743.0 L1099.2 741.5 L1099.1 739.2 L1099.8 736.9 L1100.1 734.6 L1099.5 732.2 L1099.6 729.9 L1100.0 727.6 L1103.2 727.4 L1106.1 726.1 L1105.5 723.5 L1104.3 721.1 L1103.8 718.4 L1105.1 716.5 L1105.7 714.2 L1106.9 712.3 L1108.8 710.0 L1110.6 707.7 L1113.1 706.1 L1115.2 705.0 L1117.3 703.8 L1119.1 702.1 L1121.3 701.0 L1123.0 699.2 L1121.0 697.5 L1119.7 695.3 L1118.4 693.1 L1118.7 690.7 L1119.5 688.5 L1119.2 686.1 L1123.0 687.7 L1123.3 690.5 L1124.6 693.1 L1126.6 691.7 L1128.5 690.2 L1130.7 689.2 L1133.4 688.0 L1136.1 686.9 L1137.6 685.0 L1139.2 683.1 L1141.2 680.6 L1142.3 677.7 L1144.4 678.5 L1146.1 680.0 L1148.4 680.5 L1150.7 680.7 L1153.0 680.9 L1155.3 680.8 L1157.5 682.2 L1159.9 683.1 L1162.0 680.8 L1163.8 678.4 L1165.8 677.5 L1167.9 676.7 L1170.1 676.0 L1172.2 675.4 L1174.8 675.7 L1177.4 674.9 L1179.9 675.4 L1182.5 677.4 L1184.5 680.0 L1186.3 681.4 L1188.5 682.0 L1190.6 683.0 L1192.2 684.6 L1190.8 684.2 L1192.8 682.7 L1195.4 682.3 L1197.7 680.8 L1200.4 680.4 L1203.1 680.0 L1204.4 682.6 L1205.4 685.4 L1206.9 689.2 L1208.8 692.4 L1206.3 692.9 L1204.2 694.4 L1203.1 690.4 L1200.0 690.8 L1197.8 689.4 L1195.4 688.8 L1191.5 690.0 L1193.1 693.1 L1193.3 695.9 L1194.6 698.4 L1196.9 701.1 L1199.5 699.5 L1202.3 698.4 L1204.4 695.5 L1206.7 694.1 L1209.4 693.7 L1211.1 696.1 L1210.7 700.0 L1214.6 700.7 L1218.4 699.2 L1216.8 701.5 L1214.6 703.1 L1211.5 703.8 L1209.2 703.8 L1206.9 703.8 L1204.6 706.1 L1201.8 706.7 L1199.2 707.7 L1196.1 708.5 L1193.1 709.2 L1194.6 713.0 L1193.1 716.1 L1190.0 717.7 L1189.5 720.1 L1188.4 722.3 L1187.0 724.2 L1185.3 725.9 L1183.7 727.7 L1182.1 729.5 L1180.8 731.5 L1181.7 732.0 L1183.5 730.5 L1184.8 728.7 L1186.1 726.9 L1188.5 726.6 L1190.7 727.5 L1193.1 727.3 L1195.2 728.5 L1197.1 730.1 L1199.2 731.5 L1198.8 734.4 L1197.9 737.1 L1197.7 740.0 L1196.1 741.6 L1194.2 742.8 L1192.2 743.8 L1192.2 746.3 L1192.0 748.8 L1190.8 751.1 L1190.9 753.6 L1190.7 756.1 L1189.0 757.7 L1187.2 759.0 L1184.9 759.8 L1183.5 761.7 L1181.9 763.4 L1179.9 764.5 L1182.3 765.9 L1185.0 766.8 L1187.6 767.6 L1187.5 770.1 L1189.0 772.4 L1189.0 774.9 L1189.0 777.3 L1189.4 779.8 L1189.8 782.2 L1190.7 784.5 L1193.0 785.6 L1194.5 787.6 L1194.0 790.7 L1193.0 793.7 L1189.1 792.2 L1187.9 790.0 L1187.6 787.6 L1184.9 788.0 L1182.2 787.6 L1181.4 785.2 L1179.8 783.4 L1178.4 781.4 L1177.3 779.2 L1175.3 777.6 L1173.2 776.7 L1171.4 775.2 L1169.2 774.5 L1168.9 776.8 L1168.8 779.2 L1167.9 781.4 L1167.4 783.7 L1167.6 786.1 L1165.2 786.1 L1163.0 785.3 L1162.6 783.0 L1162.1 780.6 L1161.5 778.4 L1159.2 776.6 L1157.3 774.4 L1155.3 772.2 L1153.7 770.4 L1152.5 768.3 L1151.5 766.1 L1151.0 763.8 L1151.2 761.5 L1151.1 759.1 L1150.7 756.8 L1148.1 756.7 L1145.5 756.4 L1143.0 755.3 L1140.5 756.0 L1137.9 756.1 L1135.3 756.8 L1133.2 758.0 L1130.8 758.6 L1128.5 759.5 L1126.1 759.9 L1123.7 760.2 L1121.5 761.0 L1119.3 762.2 L1116.9 762.2 L1114.5 762.1 L1112.3 761.2 L1110.0 760.4 L1107.7 759.9 L1105.0 760.8 L1102.7 762.4 L1100.0 763.0 L1097.6 761.2 L1096.1 758.7 L1093.8 756.8 L1092.6 755.0 L1091.3 753.1 L1090.2 751.2 L1089.2 749.2 Z" fill="#36a2f7" stroke="#6f7c88" stroke-width="0.8" stroke-linejoin="round"/><path d="M1216.1 717.7 L1219.2 716.9 L1220.3 719.2 L1216.9 720.3 L1216.1 717.7 Z" fill="#36a2f7" stroke="#6f7c88" stroke-width="0.6" stroke-linejoin="round"/><path d="M1220.0 713.0 L1223.0 710.7 L1224.6 712.7 L1222.5 713.8 L1220.7 715.3 L1220.0 713.0 Z" fill="#36a2f7" stroke="#6f7c88" stroke-width="0.6" stroke-linejoin="round"/><path d="M1205.4 706.1 L1207.7 705.7 L1207.3 707.7 L1205.4 706.1 Z" fill="#36a2f7" stroke="#6f7c88" stroke-width="0.6" stroke-linejoin="round"/><path d="M1196.8 766.1 L1199.4 765.3 L1202.0 765.1 L1204.5 764.5 L1205.7 766.5 L1206.7 768.6 L1207.6 770.7 L1209.7 772.6 L1212.2 773.8 L1210.5 775.4 L1210.0 777.7 L1209.1 779.7 L1207.6 781.4 L1205.8 783.3 L1204.8 785.8 L1203.0 787.6 L1200.6 786.5 L1199.2 784.1 L1196.8 783.0 L1197.1 780.7 L1198.0 778.4 L1197.9 776.0 L1198.4 773.8 L1198.3 771.1 L1197.3 768.6 L1196.8 766.1 Z" fill="#36a2f7" stroke="#6f7c88" stroke-width="0.8" stroke-linejoin="round"/><path d="M1053.7 837.4 L1055.3 835.6 L1057.4 834.5 L1059.7 834.2 L1061.9 835.0 L1064.1 835.2 L1066.3 835.4 L1068.5 835.7 L1070.8 834.7 L1073.0 835.2 L1074.5 837.4 L1076.6 838.6 L1079.0 839.3 L1081.1 840.4 L1082.4 842.4 L1084.0 844.1 L1084.8 846.3 L1084.9 848.8 L1084.3 851.3 L1084.1 853.7 L1084.2 856.1 L1085.7 858.1 L1085.8 860.4 L1086.3 862.6 L1089.3 865.6 L1086.2 866.0 L1083.4 867.1 L1080.4 866.5 L1077.4 867.1 L1076.3 865.0 L1075.5 862.8 L1075.7 860.3 L1074.5 858.2 L1072.4 856.9 L1070.0 856.7 L1068.6 858.7 L1067.5 861.0 L1065.6 862.6 L1063.0 864.5 L1061.1 867.1 L1060.5 870.1 L1059.6 873.0 L1057.3 873.3 L1055.2 874.5 L1054.3 872.5 L1053.6 870.4 L1052.2 868.6 L1050.6 866.3 L1050.1 863.5 L1048.5 861.2 L1049.5 858.5 L1050.9 856.2 L1052.2 853.7 L1052.9 851.3 L1053.1 848.8 L1053.0 846.3 L1052.8 844.1 L1053.0 841.9 L1053.4 839.7 L1053.7 837.4 Z" fill="#36a2f7" stroke="#7a8a99" stroke-width="0.7" stroke-linejoin="round"/><circle cx="1067.8" cy="871.5" r="5.2" fill="#36a2f7" stroke="#6f7c88" stroke-width="0.8"/><circle cx="1280.8" cy="640.5" r="0.9" fill="none" stroke="#8c8c8c" stroke-width="0.8"/><circle cx="1264.1" cy="698.9" r="0.9" fill="none" stroke="#8c8c8c" stroke-width="0.8"/><circle cx="1223.6" cy="710.6" r="0.9" fill="none" stroke="#8c8c8c" stroke-width="0.8"/><circle cx="1217.4" cy="718.9" r="0.9" fill="none" stroke="#8c8c8c" stroke-width="0.8"/><circle cx="1219.5" cy="735.6" r="0.9" fill="none" stroke="#8c8c8c" stroke-width="0.8"/><circle cx="1252.8" cy="671.0" r="0.9" fill="none" stroke="#8c8c8c" stroke-width="0.8"/><circle cx="1255.7" cy="673.9" r="0.9" fill="none" stroke="#8c8c8c" stroke-width="0.8"/><circle cx="1226.5" cy="684.3" r="0.9" fill="none" stroke="#8c8c8c" stroke-width="0.8"/><circle cx="1232.8" cy="688.5" r="0.9" fill="none" stroke="#8c8c8c" stroke-width="0.8"/><circle cx="1178.6" cy="826.1" r="0.9" fill="none" stroke="#8c8c8c" stroke-width="0.8"/><circle cx="1191.1" cy="796.9" r="0.9" fill="none" stroke="#8c8c8c" stroke-width="0.8"/><circle cx="1197.4" cy="792.7" r="0.9" fill="none" stroke="#8c8c8c" stroke-width="0.8"/><circle cx="1174.4" cy="801.1" r="0.9" fill="none" stroke="#8c8c8c" stroke-width="0.8"/><circle cx="1203.6" cy="771.9" r="0.9" fill="none" stroke="#8c8c8c" stroke-width="0.8"/><circle cx="1186.9" cy="780.2" r="0.9" fill="none" stroke="#8c8c8c" stroke-width="0.8"/></svg>
</div>
<div class="card" id="c_line" style="left:1361px;top:380px;width:529px;height:288px">
<div class="ch"><div class="abs" style="left:12px;top:15.5px;line-height:0"><svg width="16" height="13" viewBox="0 0 16 13"><path d="M1 0.3 V11.7 H15.6" fill="none" stroke="#1f7bff" stroke-width="1.1" stroke-linecap="round"/><path d="M3 9.6 L6.6 5.4 L8.6 8 L13.2 3" fill="none" stroke="#1f7bff" stroke-width="1.8"/><path d="M11 2 H15 V5.9 Z" fill="#1f7bff"/></svg></div><div class="t" style="left:34.5px;top:15px;font-size:14px;color:#222">折线图</div></div>
<svg class="abs" style="left:0;top:0" width="529" height="288" viewBox="1361 380 529 288"><path d="M1378.3 489.20000000000005 C1379.2 487.20000000000005 1380.4 487.20000000000005 1381.2 488.6 S1383.4 490.20000000000005 1384.3 488.0" fill="none" stroke="#2f7bf5" stroke-width="1.5" stroke-linecap="round"/><path d="M1431.8 489.20000000000005 C1432.7 487.20000000000005 1433.9 487.20000000000005 1434.7 488.6 S1436.9 490.20000000000005 1437.8 488.0" fill="none" stroke="#17c4c9" stroke-width="1.5" stroke-linecap="round"/><line x1="1441" y1="509.5" x2="1872" y2="509.5" stroke="#e2e2e2" stroke-width="1" stroke-dasharray="1.5 3.5"/><line x1="1436" y1="509.5" x2="1440" y2="509.5" stroke="#aaa" stroke-width="1"/><line x1="1441" y1="524.5" x2="1872" y2="524.5" stroke="#e2e2e2" stroke-width="1" stroke-dasharray="1.5 3.5"/><line x1="1436" y1="524.5" x2="1440" y2="524.5" stroke="#aaa" stroke-width="1"/><line x1="1441" y1="539.5" x2="1872" y2="539.5" stroke="#e2e2e2" stroke-width="1" stroke-dasharray="1.5 3.5"/><line x1="1436" y1="539.5" x2="1440" y2="539.5" stroke="#aaa" stroke-width="1"/><line x1="1441" y1="554.5" x2="1872" y2="554.5" stroke="#e2e2e2" stroke-width="1" stroke-dasharray="1.5 3.5"/><line x1="1436" y1="554.5" x2="1440" y2="554.5" stroke="#aaa" stroke-width="1"/><line x1="1441" y1="569.5" x2="1872" y2="569.5" stroke="#e2e2e2" stroke-width="1" stroke-dasharray="1.5 3.5"/><line x1="1436" y1="569.5" x2="1440" y2="569.5" stroke="#aaa" stroke-width="1"/><line x1="1441" y1="584.5" x2="1872" y2="584.5" stroke="#e2e2e2" stroke-width="1" stroke-dasharray="1.5 3.5"/><line x1="1436" y1="584.5" x2="1440" y2="584.5" stroke="#aaa" stroke-width="1"/><line x1="1441" y1="599.5" x2="1872" y2="599.5" stroke="#e2e2e2" stroke-width="1" stroke-dasharray="1.5 3.5"/><line x1="1436" y1="599.5" x2="1440" y2="599.5" stroke="#aaa" stroke-width="1"/><line x1="1477.5" y1="600" x2="1477.5" y2="604" stroke="#aaa" stroke-width="1"/><line x1="1549.5" y1="600" x2="1549.5" y2="604" stroke="#aaa" stroke-width="1"/><line x1="1621.5" y1="600" x2="1621.5" y2="604" stroke="#aaa" stroke-width="1"/><line x1="1693.5" y1="600" x2="1693.5" y2="604" stroke="#aaa" stroke-width="1"/><line x1="1765.5" y1="600" x2="1765.5" y2="604" stroke="#aaa" stroke-width="1"/><line x1="1837.5" y1="600" x2="1837.5" y2="604" stroke="#aaa" stroke-width="1"/><line x1="1549.5" y1="509" x2="1549.5" y2="603" stroke="#999" stroke-width="1"/><path d="M1477.0 598.7 C1491.4 597.3 1520.2 597.5 1549.0 591.6 C1577.8 585.7 1592.2 578.6 1621.0 569.1 C1649.8 559.6 1664.2 552.9 1693.0 544.3 C1721.8 535.7 1736.2 532.2 1765.0 525.9 C1793.8 519.6 1822.6 515.6 1837.0 513.0" fill="none" stroke="#2f7bf5" stroke-width="1.3"/><circle cx="1477" cy="598.7" r="3.0" fill="#2f7bf5"/><circle cx="1549" cy="591.6" r="3.3" fill="#2f7bf5"/><circle cx="1621" cy="569.1" r="3.0" fill="#2f7bf5"/><circle cx="1693" cy="544.3" r="3.0" fill="#2f7bf5"/><circle cx="1765" cy="525.9" r="3.0" fill="#2f7bf5"/><circle cx="1837" cy="513" r="3.0" fill="#2f7bf5"/><path d="M1477.0 577.6 C1491.4 576.6 1520.2 576.8 1549.0 572.5 C1577.8 568.2 1592.2 562.9 1621.0 556.2 C1649.8 549.5 1664.2 545.7 1693.0 539.2 C1721.8 532.7 1736.2 529.6 1765.0 523.8 C1793.8 518.0 1822.6 512.9 1837.0 510.2" fill="none" stroke="#17c4c9" stroke-width="1.3"/><circle cx="1477" cy="577.6" r="3.0" fill="#17c4c9"/><circle cx="1549" cy="572.5" r="3.3" fill="#17c4c9"/><circle cx="1621" cy="556.2" r="3.0" fill="#17c4c9"/><circle cx="1693" cy="539.2" r="3.0" fill="#17c4c9"/><circle cx="1765" cy="523.8" r="3.0" fill="#17c4c9"/><circle cx="1837" cy="510.2" r="3.0" fill="#17c4c9"/></svg><div class="abs" style="left:-1361px;top:-380px;width:0;height:0"><div class="t" style="left:1393px;top:482.5px;font-size:12px;color:#333;font-weight:normal;">北京</div><div class="t" style="left:1447px;top:482.5px;font-size:12px;color:#333;font-weight:normal;">上海</div><div class="t" style="left:1378px;top:443px;font-size:16px;color:#333;font-weight:bold;">北京上海温度趋势上半年对比</div><div class="t" style="left:1033.5px;width:400px;text-align:right;top:503px;font-size:12px;color:#999;font-weight:normal;">25°C</div><div class="t" style="left:1033.5px;width:400px;text-align:right;top:518px;font-size:12px;color:#999;font-weight:normal;">20°C</div><div class="t" style="left:1033.5px;width:400px;text-align:right;top:533px;font-size:12px;color:#999;font-weight:normal;">15°C</div><div class="t" style="left:1033.5px;width:400px;text-align:right;top:548px;font-size:12px;color:#999;font-weight:normal;">10°C</div><div class="t" style="left:1033.5px;width:400px;text-align:right;top:563px;font-size:12px;color:#999;font-weight:normal;">5°C</div><div class="t" style="left:1033.5px;width:400px;text-align:right;top:578px;font-size:12px;color:#999;font-weight:normal;">0°C</div><div class="t" style="left:1033.5px;width:400px;text-align:right;top:593px;font-size:12px;color:#999;font-weight:normal;">-5°C</div><div class="t" style="left:1277px;width:400px;text-align:center;top:608px;font-size:12px;color:#999;font-weight:normal;">一月</div><div class="t" style="left:1349px;width:400px;text-align:center;top:608px;font-size:12px;color:#999;font-weight:normal;">二月</div><div class="t" style="left:1421px;width:400px;text-align:center;top:608px;font-size:12px;color:#999;font-weight:normal;">三月</div><div class="t" style="left:1493px;width:400px;text-align:center;top:608px;font-size:12px;color:#999;font-weight:normal;">四月</div><div class="t" style="left:1565px;width:400px;text-align:center;top:608px;font-size:12px;color:#999;font-weight:normal;">五月</div><div class="t" style="left:1637px;width:400px;text-align:center;top:608px;font-size:12px;color:#999;font-weight:normal;">六月</div><div class="t" style="left:1458px;width:400px;text-align:center;top:636px;font-size:12px;color:#333;font-weight:normal;">月份</div><div class="t" style="left:1372px;top:566px;font-size:12px;color:#333;transform:rotate(-90deg);transform-origin:0 0">温度</div><div class="abs" style="left:1594px;top:435px;width:120px;height:92px;background:#fff;border-radius:4px;box-shadow:1px 2px 10px rgba(0,0,0,0.2)"></div><div class="t" style="left:1605px;top:452px;font-size:12px;color:#666;font-weight:normal;">二</div><div class="abs" style="left:1605px;top:474.5px;width:9px;height:9px;border-radius:50%;background:#17c4c9"></div><div class="abs" style="left:1605px;top:498.5px;width:9px;height:9px;border-radius:50%;background:#2f7bf5"></div><div class="t" style="left:1618.5px;top:473px;font-size:12px;color:#666;font-weight:normal;">上海</div><div class="t" style="left:1618.5px;top:497px;font-size:12px;color:#666;font-weight:normal;">北京</div><div class="t" style="left:1302px;width:400px;text-align:right;top:473px;font-size:12px;color:#444;font-weight:normal;">4.2</div><div class="t" style="left:1302px;width:400px;text-align:right;top:497px;font-size:12px;color:#444;font-weight:normal;">-2.2</div></div>
</div>
<div class="card" id="c_scat" style="left:1361px;top:684px;width:529px;height:300px">
<div class="ch"><div class="abs" style="left:12px;top:15px;line-height:0"><svg width="14" height="14" viewBox="0 0 14 14"><circle cx="6.1" cy="6.85" r="5.3" fill="none" stroke="#1f7bff" stroke-width="1.7"/><circle cx="6.1" cy="6.85" r="1.95" fill="#1f7bff"/></svg></div><div class="t" style="left:34.5px;top:15px;font-size:14px;color:#222">散点图</div></div>
<svg class="abs" style="left:0;top:0" width="529" height="300" viewBox="1361 684 529 300"><circle cx="1381" cy="793.5" r="3.6" fill="none" stroke="#3f8cf7" stroke-width="1.4"/><circle cx="1422" cy="793.5" r="3.6" fill="none" stroke="#33ccd3" stroke-width="1.4"/><line x1="1435" y1="813.5" x2="1874" y2="813.5" stroke="#e9e9e9" stroke-width="1" stroke-dasharray="1.5 3.5"/><line x1="1430" y1="813.5" x2="1434" y2="813.5" stroke="#aaa" stroke-width="1"/><line x1="1435" y1="828.5" x2="1874" y2="828.5" stroke="#e9e9e9" stroke-width="1" stroke-dasharray="1.5 3.5"/><line x1="1430" y1="828.5" x2="1434" y2="828.5" stroke="#aaa" stroke-width="1"/><line x1="1435" y1="843.5" x2="1874" y2="843.5" stroke="#e9e9e9" stroke-width="1" stroke-dasharray="1.5 3.5"/><line x1="1430" y1="843.5" x2="1434" y2="843.5" stroke="#aaa" stroke-width="1"/><line x1="1435" y1="858.5" x2="1874" y2="858.5" stroke="#e9e9e9" stroke-width="1" stroke-dasharray="1.5 3.5"/><line x1="1430" y1="858.5" x2="1434" y2="858.5" stroke="#aaa" stroke-width="1"/><line x1="1435" y1="873.5" x2="1874" y2="873.5" stroke="#e9e9e9" stroke-width="1" stroke-dasharray="1.5 3.5"/><line x1="1430" y1="873.5" x2="1434" y2="873.5" stroke="#aaa" stroke-width="1"/><line x1="1435" y1="888.5" x2="1874" y2="888.5" stroke="#e9e9e9" stroke-width="1" stroke-dasharray="1.5 3.5"/><line x1="1430" y1="888.5" x2="1434" y2="888.5" stroke="#aaa" stroke-width="1"/><line x1="1497.5" y1="813" x2="1497.5" y2="900" stroke="#e9e9e9" stroke-width="1" stroke-dasharray="1.5 3.5"/><line x1="1560" y1="813" x2="1560" y2="900" stroke="#e9e9e9" stroke-width="1" stroke-dasharray="1.5 3.5"/><line x1="1623" y1="813" x2="1623" y2="900" stroke="#e9e9e9" stroke-width="1" stroke-dasharray="1.5 3.5"/><line x1="1685.5" y1="813" x2="1685.5" y2="900" stroke="#e9e9e9" stroke-width="1" stroke-dasharray="1.5 3.5"/><line x1="1748.5" y1="813" x2="1748.5" y2="900" stroke="#e9e9e9" stroke-width="1" stroke-dasharray="1.5 3.5"/><line x1="1811" y1="813" x2="1811" y2="900" stroke="#e9e9e9" stroke-width="1" stroke-dasharray="1.5 3.5"/><line x1="1873.5" y1="813" x2="1873.5" y2="900" stroke="#e9e9e9" stroke-width="1" stroke-dasharray="1.5 3.5"/><circle cx="1593" cy="849.5" r="3.4" fill="none" stroke="#3f8cf7" stroke-width="1.25"/><circle cx="1625.7" cy="870.7" r="3.4" fill="none" stroke="#3f8cf7" stroke-width="1.25"/><circle cx="1708" cy="839.8" r="3.4" fill="none" stroke="#3f8cf7" stroke-width="1.25"/><circle cx="1720.8" cy="837.7" r="3.4" fill="none" stroke="#3f8cf7" stroke-width="1.25"/><circle cx="1737" cy="830.4" r="3.4" fill="none" stroke="#3f8cf7" stroke-width="1.25"/><circle cx="1737" cy="845.4" r="3.4" fill="none" stroke="#3f8cf7" stroke-width="1.25"/><circle cx="1752.3" cy="839" r="3.4" fill="none" stroke="#3f8cf7" stroke-width="1.25"/><circle cx="1752.3" cy="854.2" r="3.4" fill="none" stroke="#3f8cf7" stroke-width="1.25"/><circle cx="1786" cy="827.7" r="3.4" fill="none" stroke="#3f8cf7" stroke-width="1.25"/><circle cx="1786" cy="865" r="3.4" fill="none" stroke="#3f8cf7" stroke-width="1.25"/><circle cx="1867.6" cy="816.6" r="3.4" fill="none" stroke="#3f8cf7" stroke-width="1.25"/><circle cx="1500" cy="851" r="3.4" fill="none" stroke="#33ccd3" stroke-width="1.25"/><circle cx="1572.8" cy="859.2" r="3.4" fill="none" stroke="#33ccd3" stroke-width="1.25"/><circle cx="1591.6" cy="875.4" r="3.4" fill="none" stroke="#33ccd3" stroke-width="1.25"/><circle cx="1622.8" cy="875.4" r="3.4" fill="none" stroke="#33ccd3" stroke-width="1.25"/><circle cx="1634.6" cy="881.9" r="3.4" fill="none" stroke="#33ccd3" stroke-width="1.25"/><circle cx="1654.6" cy="881" r="3.4" fill="none" stroke="#33ccd3" stroke-width="1.25"/><circle cx="1657.2" cy="871" r="3.4" fill="none" stroke="#33ccd3" stroke-width="1.25"/><circle cx="1660.2" cy="870" r="3.4" fill="none" stroke="#33ccd3" stroke-width="1.25"/><circle cx="1688.1" cy="877.5" r="3.4" fill="none" stroke="#33ccd3" stroke-width="1.25"/><circle cx="1700.8" cy="863.6" r="3.4" fill="none" stroke="#33ccd3" stroke-width="1.25"/><circle cx="1704.6" cy="853.6" r="3.4" fill="none" stroke="#33ccd3" stroke-width="1.25"/></svg><div class="abs" style="left:-1361px;top:-684px;width:0;height:0"><div class="t" style="left:1378px;top:747px;font-size:16px;color:#333;font-weight:bold;">身高体重分布散点图</div><div class="t" style="left:1393px;top:787px;font-size:12px;color:#333;font-weight:normal;">男</div><div class="t" style="left:1434.5px;top:787px;font-size:12px;color:#333;font-weight:normal;">女</div><div class="t" style="left:1027px;width:400px;text-align:right;top:807px;font-size:12px;color:#999;font-weight:normal;">100</div><div class="t" style="left:1027px;width:400px;text-align:right;top:822px;font-size:12px;color:#999;font-weight:normal;">90</div><div class="t" style="left:1027px;width:400px;text-align:right;top:837px;font-size:12px;color:#999;font-weight:normal;">80</div><div class="t" style="left:1027px;width:400px;text-align:right;top:852px;font-size:12px;color:#999;font-weight:normal;">70</div><div class="t" style="left:1027px;width:400px;text-align:right;top:867px;font-size:12px;color:#999;font-weight:normal;">60</div><div class="t" style="left:1027px;width:400px;text-align:right;top:882px;font-size:12px;color:#999;font-weight:normal;">50</div><div class="t" style="left:1372px;top:882px;font-size:12px;color:#333;transform:rotate(-90deg);transform-origin:0 0">体重(kg)</div></div>
</div>

<div id="ftr"><div class="t" style="left:0;width:1665px;text-align:center;top:9px;font-size:14px;color:#333">Gadmin V9.0 [当前系统版本：9.0.9]</div></div>

<div class="abs" style="left:1912px;top:61px;width:8px;height:819px;background:#f0f0f0"></div>
<div class="abs" style="left:1906px;top:60px;width:6px;height:489px;background:#a3a3a3;border-radius:3px"></div>
<div class="abs" style="left:1910px;top:300px;width:7px;height:58px;border-radius:3.5px;background:linear-gradient(#f7f7f7,#e6e6e6);"></div>
<div class="abs" style="left:1910px;top:332px;width:7px;height:26px;border-radius:0 0 3.5px 3.5px;background:linear-gradient(#0ed39a,#12a8f5)"></div>
<div class="abs" style="left:1803px;top:853px;width:109px;height:4px;background:#1b1b1b;border-radius:3px 0 0 0"></div>
<div class="abs" style="left:1803px;top:853px;width:30px;height:4px;background:#6aaa3c;border-radius:3px 0 0 0"></div>
<div class="abs" style="left:1793px;top:857px;width:140px;height:53px;background:#fff;border-radius:7px;box-shadow:0 0 28px 4px rgba(0,0,0,0.09)"></div>
<svg class="abs" style="left:1808px;top:865px" width="38" height="38" viewBox="0 0 38 38"><circle cx="19" cy="19" r="18.8" fill="#393c49"/>
<g fill="none" stroke="#19b39c" stroke-width="1.3" stroke-linecap="round">
<path d="M11.5 16.5 Q11.5 6.5 19 6.2 Q26.5 6.5 26.5 16.5"/>
<path d="M12.5 12 Q15 10.5 16 12 Q18 10 19.5 12 Q21.5 10 23 12 Q25 10.5 26 12.5"/>
<path d="M12 14 Q12 24 19 24.5 Q26 24 26 14"/>
<path d="M12 15.5 Q9.5 16 10 18 Q11 20 12.5 19.5"/>
<path d="M26 15.5 Q28.5 16 28 18 Q27 20 25.5 19.5"/>
<path d="M16.5 18.2 Q19 20.2 21.5 18.2"/>
<path d="M13.2 31.8 Q13.2 26.5 19 26.2 Q24.8 26.5 24.8 31.8 Z"/>
<path d="M19 27.5 V30.5"/>
</g></svg>
<div class="t" style="left:1856px;top:876px;font-size:16px;color:#333">流之云</div>
<div class="t" style="left:1850px;top:893px;font-size:16.8px;color:#1a8ec3;font-style:italic">cojz8.com</div>
<div class="abs" style="left:0;top:0;width:1920px;height:911px;overflow:hidden;pointer-events:none;z-index:10"><div class="t" style="left:-292px;top:52px;font-size:16.5px;color:rgba(150,150,150,0.10);transform:rotate(-20.5deg);transform-origin:0 100%">ld:12026-04-07gadmin</div><div class="t" style="left:41px;top:52px;font-size:16.5px;color:rgba(150,150,150,0.10);transform:rotate(-20.5deg);transform-origin:0 100%">ld:12026-04-07gadmin</div><div class="t" style="left:374px;top:52px;font-size:16.5px;color:rgba(150,150,150,0.10);transform:rotate(-20.5deg);transform-origin:0 100%">ld:12026-04-07gadmin</div><div class="t" style="left:707px;top:52px;font-size:16.5px;color:rgba(150,150,150,0.10);transform:rotate(-20.5deg);transform-origin:0 100%">ld:12026-04-07gadmin</div><div class="t" style="left:1040px;top:52px;font-size:16.5px;color:rgba(150,150,150,0.10);transform:rotate(-20.5deg);transform-origin:0 100%">ld:12026-04-07gadmin</div><div class="t" style="left:1373px;top:52px;font-size:16.5px;color:rgba(150,150,150,0.10);transform:rotate(-20.5deg);transform-origin:0 100%">ld:12026-04-07gadmin</div><div class="t" style="left:1706px;top:52px;font-size:16.5px;color:rgba(150,150,150,0.10);transform:rotate(-20.5deg);transform-origin:0 100%">ld:12026-04-07gadmin</div><div class="t" style="left:2039px;top:52px;font-size:16.5px;color:rgba(150,150,150,0.10);transform:rotate(-20.5deg);transform-origin:0 100%">ld:12026-04-07gadmin</div><div class="t" style="left:-292px;top:183px;font-size:16.5px;color:rgba(150,150,150,0.10);transform:rotate(-20.5deg);transform-origin:0 100%">ld:12026-04-07gadmin</div><div class="t" style="left:41px;top:183px;font-size:16.5px;color:rgba(150,150,150,0.10);transform:rotate(-20.5deg);transform-origin:0 100%">ld:12026-04-07gadmin</div><div class="t" style="left:374px;top:183px;font-size:16.5px;color:rgba(150,150,150,0.10);transform:rotate(-20.5deg);transform-origin:0 100%">ld:12026-04-07gadmin</div><div class="t" style="left:707px;top:183px;font-size:16.5px;color:rgba(150,150,150,0.10);transform:rotate(-20.5deg);transform-origin:0 100%">ld:12026-04-07gadmin</div><div class="t" style="left:1040px;top:183px;font-size:16.5px;color:rgba(150,150,150,0.10);transform:rotate(-20.5deg);transform-origin:0 100%">ld:12026-04-07gadmin</div><div class="t" style="left:1373px;top:183px;font-size:16.5px;color:rgba(150,150,150,0.10);transform:rotate(-20.5deg);transform-origin:0 100%">ld:12026-04-07gadmin</div><div class="t" style="left:1706px;top:183px;font-size:16.5px;color:rgba(150,150,150,0.10);transform:rotate(-20.5deg);transform-origin:0 100%">ld:12026-04-07gadmin</div><div class="t" style="left:2039px;top:183px;font-size:16.5px;color:rgba(150,150,150,0.10);transform:rotate(-20.5deg);transform-origin:0 100%">ld:12026-04-07gadmin</div><div class="t" style="left:-292px;top:314px;font-size:16.5px;color:rgba(150,150,150,0.10);transform:rotate(-20.5deg);transform-origin:0 100%">ld:12026-04-07gadmin</div><div class="t" style="left:41px;top:314px;font-size:16.5px;color:rgba(150,150,150,0.10);transform:rotate(-20.5deg);transform-origin:0 100%">ld:12026-04-07gadmin</div><div class="t" style="left:374px;top:314px;font-size:16.5px;color:rgba(150,150,150,0.10);transform:rotate(-20.5deg);transform-origin:0 100%">ld:12026-04-07gadmin</div><div class="t" style="left:707px;top:314px;font-size:16.5px;color:rgba(150,150,150,0.10);transform:rotate(-20.5deg);transform-origin:0 100%">ld:12026-04-07gadmin</div><div class="t" style="left:1040px;top:314px;font-size:16.5px;color:rgba(150,150,150,0.10);transform:rotate(-20.5deg);transform-origin:0 100%">ld:12026-04-07gadmin</div><div class="t" style="left:1373px;top:314px;font-size:16.5px;color:rgba(150,150,150,0.10);transform:rotate(-20.5deg);transform-origin:0 100%">ld:12026-04-07gadmin</div><div class="t" style="left:1706px;top:314px;font-size:16.5px;color:rgba(150,150,150,0.10);transform:rotate(-20.5deg);transform-origin:0 100%">ld:12026-04-07gadmin</div><div class="t" style="left:2039px;top:314px;font-size:16.5px;color:rgba(150,150,150,0.10);transform:rotate(-20.5deg);transform-origin:0 100%">ld:12026-04-07gadmin</div><div class="t" style="left:-292px;top:445px;font-size:16.5px;color:rgba(150,150,150,0.10);transform:rotate(-20.5deg);transform-origin:0 100%">ld:12026-04-07gadmin</div><div class="t" style="left:41px;top:445px;font-size:16.5px;color:rgba(150,150,150,0.10);transform:rotate(-20.5deg);transform-origin:0 100%">ld:12026-04-07gadmin</div><div class="t" style="left:374px;top:445px;font-size:16.5px;color:rgba(150,150,150,0.10);transform:rotate(-20.5deg);transform-origin:0 100%">ld:12026-04-07gadmin</div><div class="t" style="left:707px;top:445px;font-size:16.5px;color:rgba(150,150,150,0.10);transform:rotate(-20.5deg);transform-origin:0 100%">ld:12026-04-07gadmin</div><div class="t" style="left:1040px;top:445px;font-size:16.5px;color:rgba(150,150,150,0.10);transform:rotate(-20.5deg);transform-origin:0 100%">ld:12026-04-07gadmin</div><div class="t" style="left:1373px;top:445px;font-size:16.5px;color:rgba(150,150,150,0.10);transform:rotate(-20.5deg);transform-origin:0 100%">ld:12026-04-07gadmin</div><div class="t" style="left:1706px;top:445px;font-size:16.5px;color:rgba(150,150,150,0.10);transform:rotate(-20.5deg);transform-origin:0 100%">ld:12026-04-07gadmin</div><div class="t" style="left:2039px;top:445px;font-size:16.5px;color:rgba(150,150,150,0.10);transform:rotate(-20.5deg);transform-origin:0 100%">ld:12026-04-07gadmin</div><div class="t" style="left:-292px;top:576px;font-size:16.5px;color:rgba(150,150,150,0.10);transform:rotate(-20.5deg);transform-origin:0 100%">ld:12026-04-07gadmin</div><div class="t" style="left:41px;top:576px;font-size:16.5px;color:rgba(150,150,150,0.10);transform:rotate(-20.5deg);transform-origin:0 100%">ld:12026-04-07gadmin</div><div class="t" style="left:374px;top:576px;font-size:16.5px;color:rgba(150,150,150,0.10);transform:rotate(-20.5deg);transform-origin:0 100%">ld:12026-04-07gadmin</div><div class="t" style="left:707px;top:576px;font-size:16.5px;color:rgba(150,150,150,0.10);transform:rotate(-20.5deg);transform-origin:0 100%">ld:12026-04-07gadmin</div><div class="t" style="left:1040px;top:576px;font-size:16.5px;color:rgba(150,150,150,0.10);transform:rotate(-20.5deg);transform-origin:0 100%">ld:12026-04-07gadmin</div><div class="t" style="left:1373px;top:576px;font-size:16.5px;color:rgba(150,150,150,0.10);transform:rotate(-20.5deg);transform-origin:0 100%">ld:12026-04-07gadmin</div><div class="t" style="left:1706px;top:576px;font-size:16.5px;color:rgba(150,150,150,0.10);transform:rotate(-20.5deg);transform-origin:0 100%">ld:12026-04-07gadmin</div><div class="t" style="left:2039px;top:576px;font-size:16.5px;color:rgba(150,150,150,0.10);transform:rotate(-20.5deg);transform-origin:0 100%">ld:12026-04-07gadmin</div></div>
</body></html>
